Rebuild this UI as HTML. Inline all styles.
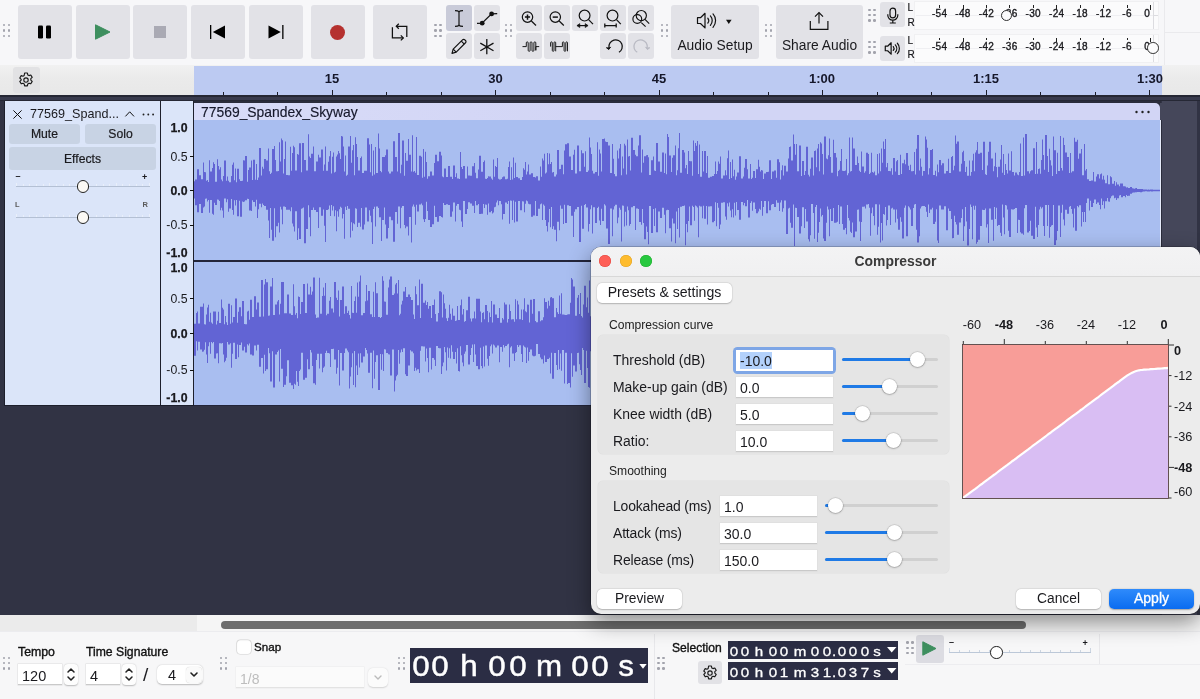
<!DOCTYPE html>
<html><head><meta charset="utf-8"><title>Audacity</title>
<style>
*{box-sizing:border-box;margin:0;padding:0}
html,body{width:1200px;height:699px;overflow:hidden}
body{position:relative;background:#f6f6f8;font-family:"Liberation Sans",sans-serif;color:#1a1a1e;font-size:14px}
.abs,.btn,.grab i,.t,svg.ic{position:absolute}
.btn{background:#e2e2e7;border-radius:3px}
.grab i{width:2.6px;height:2.6px;background:#a2a3ac;border-radius:50%;display:block}
.t{white-space:nowrap;line-height:1}
.md{-webkit-text-stroke:.35px #111;color:#111}
svg{position:absolute;overflow:visible}
.fld{position:absolute;background:#fff;border-bottom:1px solid #c9c9c9;box-shadow:0 0 0 .5px #dcdcdc}
.fld span{position:absolute;left:4px;top:4px;font-size:14px;line-height:1}
.sl{position:absolute;height:3px;border-radius:2px;background:#d0d0d0}
.sl b{position:absolute;left:0;top:0;height:3px;border-radius:2px;background:#1f7ae6;display:block}
.kn{position:absolute;width:15px;height:15px;border-radius:50%;background:#fff;box-shadow:0 .5px 2px rgba(0,0,0,.35),0 0 0 .5px rgba(0,0,0,.12)}
.mbtn{position:absolute;background:#fff;border-radius:5px;box-shadow:0 .5px 1.5px rgba(0,0,0,.22),0 0 0 .5px rgba(0,0,0,.06);text-align:center;font-size:14px}
.ch{position:absolute;color:#fff;text-align:center;line-height:1;white-space:nowrap}
#root{position:absolute;left:0;top:0;width:1200px;height:699px;overflow:hidden;will-change:transform}
</style></head><body><div id="root">
<div class="abs" style="left:0;top:0;width:1200px;height:65px;background:#f7f7f9"></div><div class="grab"><i style="left:2.6px;top:23.9px"></i><i style="left:7.7px;top:23.9px"></i><i style="left:2.6px;top:29.2px"></i><i style="left:7.7px;top:29.2px"></i><i style="left:2.6px;top:34.5px"></i><i style="left:7.7px;top:34.5px"></i></div><div class="btn" style="left:18px;top:5px;width:54px;height:54px"></div><div class="btn" style="left:76px;top:5px;width:54px;height:54px"></div><div class="btn" style="left:133px;top:5px;width:54px;height:54px"></div><div class="btn" style="left:191px;top:5px;width:54px;height:54px"></div><div class="btn" style="left:249px;top:5px;width:54px;height:54px"></div><div class="btn" style="left:311px;top:5px;width:54px;height:54px"></div><div class="btn" style="left:373px;top:5px;width:54px;height:54px"></div><div class="btn" style="left:446px;top:5px;width:26px;height:26px;background:#c9cbd9"></div><div class="btn" style="left:474px;top:5px;width:26px;height:26px"></div><div class="btn" style="left:446px;top:33px;width:26px;height:26px"></div><div class="btn" style="left:474px;top:33px;width:26px;height:26px"></div><div class="btn" style="left:516px;top:5px;width:26px;height:26px"></div><div class="btn" style="left:544px;top:5px;width:26px;height:26px"></div><div class="btn" style="left:572px;top:5px;width:26px;height:26px"></div><div class="btn" style="left:600px;top:5px;width:26px;height:26px"></div><div class="btn" style="left:628px;top:5px;width:26px;height:26px"></div><div class="btn" style="left:516px;top:33px;width:26px;height:26px"></div><div class="btn" style="left:544px;top:33px;width:26px;height:26px"></div><div class="btn" style="left:600px;top:33px;width:26px;height:26px"></div><div class="btn" style="left:628px;top:33px;width:26px;height:26px"></div><div class="btn" style="left:671px;top:5px;width:88px;height:54px"></div><div class="btn" style="left:776px;top:5px;width:87px;height:54px"></div><div class="btn" style="left:880px;top:2px;width:25px;height:25px"></div><div class="btn" style="left:880px;top:36px;width:25px;height:25px"></div><div class="grab"><i style="left:434.1px;top:23.9px"></i><i style="left:439.2px;top:23.9px"></i><i style="left:434.1px;top:29.2px"></i><i style="left:439.2px;top:29.2px"></i><i style="left:434.1px;top:34.5px"></i><i style="left:439.2px;top:34.5px"></i></div><div class="grab"><i style="left:504.5px;top:23.9px"></i><i style="left:509.6px;top:23.9px"></i><i style="left:504.5px;top:29.2px"></i><i style="left:509.6px;top:29.2px"></i><i style="left:504.5px;top:34.5px"></i><i style="left:509.6px;top:34.5px"></i></div><div class="grab"><i style="left:660.6px;top:23.9px"></i><i style="left:665.7px;top:23.9px"></i><i style="left:660.6px;top:29.2px"></i><i style="left:665.7px;top:29.2px"></i><i style="left:660.6px;top:34.5px"></i><i style="left:665.7px;top:34.5px"></i></div><div class="grab"><i style="left:764.6px;top:23.9px"></i><i style="left:769.7px;top:23.9px"></i><i style="left:764.6px;top:29.2px"></i><i style="left:769.7px;top:29.2px"></i><i style="left:764.6px;top:34.5px"></i><i style="left:769.7px;top:34.5px"></i></div><div class="grab"><i style="left:868.3px;top:8.5px"></i><i style="left:873.4px;top:8.5px"></i><i style="left:868.3px;top:13.8px"></i><i style="left:873.4px;top:13.8px"></i><i style="left:868.3px;top:19.1px"></i><i style="left:873.4px;top:19.1px"></i></div><div class="grab"><i style="left:868.3px;top:40.5px"></i><i style="left:873.4px;top:40.5px"></i><i style="left:868.3px;top:45.8px"></i><i style="left:873.4px;top:45.8px"></i><i style="left:868.3px;top:51.1px"></i><i style="left:873.4px;top:51.1px"></i></div><svg style="left:0;top:0" width="1200" height="65"><rect x="38" y="25.500" width="5" height="13" rx="1.300" fill="#000"/><rect x="46" y="25.500" width="5" height="13" rx="1.300" fill="#000"/><path d="M95.500 24.800L110 32 95.500 39.200Z" fill="#3e8f5f" stroke="#3e8f5f" stroke-width="1" stroke-linejoin="round"/><rect x="154" y="26" width="12" height="12" fill="#aaaab4"/><rect x="210" y="25" width="1.300" height="14" fill="#000"/><path d="M225 25.500V38.500L212.800 32Z" fill="#000"/><rect x="282.200" y="25" width="1.300" height="14" fill="#000"/><path d="M268.500 25.500V38.500L280.800 32Z" fill="#000"/><circle cx="337.500" cy="32.500" r="7.500" fill="#b5312f"/><g fill="none" stroke="#111" stroke-width="1.250"><path d="M392.400 27.200V37.900H403.200"/><path d="M400.800 35.400l2.500 2.500-2.500 2.500"/><path d="M406.800 37V26.300H396.400"/><path d="M398.800 23.800l-2.500 2.500 2.500 2.500"/></g><g fill="none" stroke="#111" stroke-width="1.200"><path d="M459 11.200V25.800"/><path d="M455 10.700q3 0 4 1q1-1 4-1M455 26.300q3 0 4-1q1 1 4 1"/></g><path d="M477 23.400L482 23.200 491.600 13.900 497.200 13.700" stroke="#111" stroke-width="1.300" fill="none"/><circle cx="482.200" cy="23.200" r="2.400" fill="#111"/><circle cx="491.600" cy="13.900" r="2.400" fill="#111"/><g transform="translate(451,38.300)" fill="none" stroke="#111" stroke-width="1.200" stroke-linejoin="round"><path d="M1 15l1.200-4.200L11.500 1.500a1.600 1.600 0 0 1 2.300 0l.7.700a1.600 1.600 0 0 1 0 2.300L5.200 13.800z"/><path d="M2.200 10.800l3 3M10.300 2.800l3 3"/></g><path d="M486.800 39V54.300M480.300 43.100l13.200 7.700M493.500 43.100l-13.200 7.700" stroke="#111" stroke-width="1.300" fill="none"/><g fill="none" stroke="#111" stroke-width="1.200"><circle cx="527.5" cy="17.100" r="5.200"/><path d="M531.4 21l4.600 4.500"/><path d="M524.9 17.100h5.200M527.5 14.500v5.200" stroke-width="1.500"/></g><g fill="none" stroke="#111" stroke-width="1.200"><circle cx="555.3" cy="17.100" r="5.200"/><path d="M559.2 21l4.600 4.500"/><path d="M552.7 17.100h5.200" stroke-width="1.500"/></g><g fill="none" stroke="#111" stroke-width="1.200"><circle cx="584.600" cy="15.600" r="5.400"/><path d="M588.600 19.600l4.400 4.600"/><path d="M577.500 25.600h10"/><path d="M579.800 23.600l-2.900 2 2.900 2zM585.200 23.600l2.900 2-2.900 2z" fill="#111" stroke-width=".6"/></g><g fill="none" stroke="#111" stroke-width="1.200"><circle cx="612.500" cy="15.600" r="5.400"/><path d="M616.500 19.600l4.300 4.600"/><path d="M604.800 25.600h11.400M604.800 23.600v4M616.200 23.600v4" stroke-width="1.300"/></g><g fill="none" stroke="#111" stroke-width="1.150"><circle cx="641.300" cy="15.600" r="5.100"/><circle cx="637.300" cy="19" r="4.400"/><path d="M645 19.400l4.200 4.200M641.300 22.600l4.300 4"/></g><g fill="none" stroke="#111" stroke-width=".950"><path d="M522.500 46.600h3.800M535.800 46.600h3.400"/><path d="M526.30 46.60V42.85a0.95 0.95 0 0 1 1.90 0V50.35a0.95 0.95 0 0 0 1.90 0V42.85a0.95 0.95 0 0 1 1.90 0V50.35a0.95 0.95 0 0 0 1.90 0V42.85a0.95 0.95 0 0 1 1.90 0V50.35V46.600"/></g><g fill="none" stroke="#111" stroke-width=".950"><path d="M555.600 46.600h6.800"/><path d="M550.60 46.60V42.75a0.85 0.85 0 0 1 1.70 0V50.45a0.85 0.85 0 0 0 1.70 0V42.75a0.85 0.85 0 0 1 1.70 0V51.300"/><path d="M562.40 46.60V42.75a0.85 0.85 0 0 1 1.70 0V50.45a0.85 0.85 0 0 0 1.70 0V42.75a0.85 0.85 0 0 1 1.70 0V51.300"/></g><g fill="none" stroke="#111" stroke-width="1.250"><path d="M608.97 47.43A6.70 6.70 0 1 1 618.95 52.30"/><path d="M606.200 47.600l2.600 1.900 1.900-2.600" fill="#111" stroke-width="1" stroke-linejoin="round"/></g><g fill="none" stroke="#b9bac3" stroke-width="1.250"><path d="M647.23 47.43A6.70 6.70 0 1 0 637.25 52.30"/><path d="M650 47.600l-2.600 1.900-1.900-2.600" fill="#b9bac3" stroke-width="1" stroke-linejoin="round"/></g><g transform="translate(696.5,12.3) scale(1.00)" fill="none" stroke="#111" stroke-width="1.20" stroke-linejoin="round"><path d="M1 5.400h3L8.500 1v14.600L4 11.200H1z"/><path d="M11.300 5.800a4 4 0 0 1 0 5M13.900 3.600a7 7 0 0 1 0 9.400M16.500 1.600a10 10 0 0 1 0 13.400" stroke-linecap="round"/></g><path d="M726 19.800h5.600l-2.800 4.200z" fill="#111"/><g transform="translate(884.5,42.0) scale(0.78)" fill="none" stroke="#111" stroke-width="1.54" stroke-linejoin="round"><path d="M1 5.400h3L8.500 1v14.600L4 11.200H1z"/><path d="M11.300 5.800a4 4 0 0 1 0 5M13.900 3.600a7 7 0 0 1 0 9.400M16.500 1.600a10 10 0 0 1 0 13.400" stroke-linecap="round"/></g><g fill="none" stroke="#111" stroke-width="1.200"><path d="M810.300 21v8.300h17.600V21"/><path d="M819 23.400V12.800"/><path d="M815 16.600l4-4 4 4"/></g><g fill="none" stroke="#111" stroke-width="1.200"><rect x="890" y="8.200" width="5.600" height="9.600" rx="2.800"/><path d="M887.800 14.200v1a5 5 0 0 0 10 0v-1M892.800 20.300v2.600M889.800 23h6"/></g></svg><div class="t" style="left:671px;top:38.500px;width:88px;text-align:center;font-size:13.800px">Audio Setup</div><div class="t" style="left:776px;top:39px;width:87px;text-align:center;font-size:13.800px">Share Audio</div><div class="abs" style="left:915px;top:2.0px;width:243px;height:27px;background:#fbfbfc;box-shadow:0 0 0 1px #f0f0f2"></div><div class="abs" style="left:916px;top:15.0px;width:237px;height:1px;background:#efeff2"></div><div class="abs" style="left:1153px;top:2.0px;width:1px;height:27px;background:#dcdce0"></div><div class="abs" style="left:1153px;top:15.0px;width:5px;height:1px;background:#dcdce0"></div><div class="t" style="left:907.500px;top:2.8px;font-size:10px;-webkit-text-stroke:.2px #1a1a1e">L</div><div class="t" style="left:907.500px;top:17.8px;font-size:10px;-webkit-text-stroke:.2px #1a1a1e">R</div><div class="t" style="left:924.6px;top:9.3px;width:30px;text-align:center;font-size:10px;letter-spacing:.3px;-webkit-text-stroke:.35px #1a1a1e">-54</div><div class="abs" style="left:939.1px;top:5.0px;width:1px;height:2.6px;background:#222"></div><div class="t" style="left:948.0px;top:9.3px;width:30px;text-align:center;font-size:10px;letter-spacing:.3px;-webkit-text-stroke:.35px #1a1a1e">-48</div><div class="abs" style="left:962.5px;top:5.0px;width:1px;height:4.6px;background:#222"></div><div class="t" style="left:971.5px;top:9.3px;width:30px;text-align:center;font-size:10px;letter-spacing:.3px;-webkit-text-stroke:.35px #1a1a1e">-42</div><div class="abs" style="left:986.0px;top:5.0px;width:1px;height:2.6px;background:#222"></div><div class="t" style="left:994.9px;top:9.3px;width:30px;text-align:center;font-size:10px;letter-spacing:.3px;-webkit-text-stroke:.35px #1a1a1e">-36</div><div class="abs" style="left:1009.4px;top:5.0px;width:1px;height:2.6px;background:#222"></div><div class="t" style="left:1018.3px;top:9.3px;width:30px;text-align:center;font-size:10px;letter-spacing:.3px;-webkit-text-stroke:.35px #1a1a1e">-30</div><div class="abs" style="left:1032.8px;top:5.0px;width:1px;height:2.6px;background:#222"></div><div class="t" style="left:1041.8px;top:9.3px;width:30px;text-align:center;font-size:10px;letter-spacing:.3px;-webkit-text-stroke:.35px #1a1a1e">-24</div><div class="abs" style="left:1056.2px;top:5.0px;width:1px;height:4.6px;background:#222"></div><div class="t" style="left:1065.2px;top:9.3px;width:30px;text-align:center;font-size:10px;letter-spacing:.3px;-webkit-text-stroke:.35px #1a1a1e">-18</div><div class="abs" style="left:1079.7px;top:5.0px;width:1px;height:2.6px;background:#222"></div><div class="t" style="left:1088.6px;top:9.3px;width:30px;text-align:center;font-size:10px;letter-spacing:.3px;-webkit-text-stroke:.35px #1a1a1e">-12</div><div class="abs" style="left:1103.1px;top:5.0px;width:1px;height:2.6px;background:#222"></div><div class="t" style="left:1112.0px;top:9.3px;width:30px;text-align:center;font-size:10px;letter-spacing:.3px;-webkit-text-stroke:.35px #1a1a1e">-6</div><div class="abs" style="left:1126.5px;top:5.0px;width:1px;height:2.6px;background:#222"></div><div class="t" style="left:1120.2px;top:9.3px;width:30px;text-align:right;font-size:10px;letter-spacing:.3px;-webkit-text-stroke:.35px #1a1a1e">0</div><div class="abs" style="left:1150.0px;top:5.0px;width:1px;height:4.6px;background:#222"></div><div class="abs" style="left:915px;top:34.5px;width:243px;height:27px;background:#fbfbfc;box-shadow:0 0 0 1px #f0f0f2"></div><div class="abs" style="left:916px;top:47.5px;width:237px;height:1px;background:#efeff2"></div><div class="abs" style="left:1153px;top:34.5px;width:1px;height:27px;background:#dcdce0"></div><div class="abs" style="left:1153px;top:47.5px;width:5px;height:1px;background:#dcdce0"></div><div class="t" style="left:907.500px;top:35.9px;font-size:10px;-webkit-text-stroke:.2px #1a1a1e">L</div><div class="t" style="left:907.500px;top:50.3px;font-size:10px;-webkit-text-stroke:.2px #1a1a1e">R</div><div class="t" style="left:924.6px;top:41.9px;width:30px;text-align:center;font-size:10px;letter-spacing:.3px;-webkit-text-stroke:.35px #1a1a1e">-54</div><div class="abs" style="left:939.1px;top:37.6px;width:1px;height:2.6px;background:#222"></div><div class="t" style="left:948.0px;top:41.9px;width:30px;text-align:center;font-size:10px;letter-spacing:.3px;-webkit-text-stroke:.35px #1a1a1e">-48</div><div class="abs" style="left:962.5px;top:37.6px;width:1px;height:4.6px;background:#222"></div><div class="t" style="left:971.5px;top:41.9px;width:30px;text-align:center;font-size:10px;letter-spacing:.3px;-webkit-text-stroke:.35px #1a1a1e">-42</div><div class="abs" style="left:986.0px;top:37.6px;width:1px;height:2.6px;background:#222"></div><div class="t" style="left:994.9px;top:41.9px;width:30px;text-align:center;font-size:10px;letter-spacing:.3px;-webkit-text-stroke:.35px #1a1a1e">-36</div><div class="abs" style="left:1009.4px;top:37.6px;width:1px;height:2.6px;background:#222"></div><div class="t" style="left:1018.3px;top:41.9px;width:30px;text-align:center;font-size:10px;letter-spacing:.3px;-webkit-text-stroke:.35px #1a1a1e">-30</div><div class="abs" style="left:1032.8px;top:37.6px;width:1px;height:2.6px;background:#222"></div><div class="t" style="left:1041.8px;top:41.9px;width:30px;text-align:center;font-size:10px;letter-spacing:.3px;-webkit-text-stroke:.35px #1a1a1e">-24</div><div class="abs" style="left:1056.2px;top:37.6px;width:1px;height:4.6px;background:#222"></div><div class="t" style="left:1065.2px;top:41.9px;width:30px;text-align:center;font-size:10px;letter-spacing:.3px;-webkit-text-stroke:.35px #1a1a1e">-18</div><div class="abs" style="left:1079.7px;top:37.6px;width:1px;height:2.6px;background:#222"></div><div class="t" style="left:1088.6px;top:41.9px;width:30px;text-align:center;font-size:10px;letter-spacing:.3px;-webkit-text-stroke:.35px #1a1a1e">-12</div><div class="abs" style="left:1103.1px;top:37.6px;width:1px;height:2.6px;background:#222"></div><div class="t" style="left:1112.0px;top:41.9px;width:30px;text-align:center;font-size:10px;letter-spacing:.3px;-webkit-text-stroke:.35px #1a1a1e">-6</div><div class="abs" style="left:1126.5px;top:37.6px;width:1px;height:2.6px;background:#222"></div><div class="t" style="left:1120.2px;top:41.9px;width:30px;text-align:right;font-size:10px;letter-spacing:.3px;-webkit-text-stroke:.35px #1a1a1e">0</div><div class="abs" style="left:1150.0px;top:37.6px;width:1px;height:4.6px;background:#222"></div><div class="abs" style="left:1000.800px;top:9.900px;width:11.600px;height:11.600px;border-radius:50%;border:1.400px solid #2e2e2e;background:#fbfbfc"></div><div class="abs" style="left:1147.400px;top:42.400px;width:11.600px;height:11.600px;border-radius:50%;border:1.400px solid #2e2e2e;background:#fbfbfc"></div><div class="abs" style="left:1164px;top:0;width:1px;height:65px;background:#eaeaed"></div><div class="abs" style="left:1165px;top:32px;width:35px;height:1px;background:#eaeaed"></div><div class="abs" style="left:0;top:65px;width:1200px;height:30px;background:linear-gradient(#f1f1f1,#ebebeb 40%,#e8e8e8)"></div><div class="abs" style="left:194px;top:66px;width:968px;height:29px;background:#bccaf2"></div><div class="btn" style="left:13px;top:67px;width:27px;height:26px;background:#e2e2e4"></div><svg style="left:18.0px;top:72.0px" width="16" height="16" viewBox="0 0 16 16" fill="none" stroke="#1a1a1a" stroke-width="1.150" stroke-linejoin="round"><path d="M6.600 1h2.800l.4 1.900 1.200.7 1.800-.6 1.400 2.400-1.400 1.300v1.400l1.400 1.300-1.400 2.400-1.800-.6-1.200.7-.4 1.900H6.600l-.4-1.900-1.200-.7-1.800.6-1.400-2.400 1.400-1.300V7.300L1.800 6 3.200 3.600l1.800.6 1.200-.7z"/><circle cx="8" cy="8" r="2.200"/></svg><div class="abs" style="left:222.5px;top:92px;width:1px;height:3px;background:#1b1d2b"></div><div class="abs" style="left:277.0px;top:92px;width:1px;height:3px;background:#1b1d2b"></div><div class="abs" style="left:331.5px;top:90px;width:1px;height:5px;background:#1b1d2b"></div><div class="abs" style="left:386.0px;top:92px;width:1px;height:3px;background:#1b1d2b"></div><div class="abs" style="left:440.5px;top:92px;width:1px;height:3px;background:#1b1d2b"></div><div class="abs" style="left:495.0px;top:90px;width:1px;height:5px;background:#1b1d2b"></div><div class="abs" style="left:549.5px;top:92px;width:1px;height:3px;background:#1b1d2b"></div><div class="abs" style="left:604.0px;top:92px;width:1px;height:3px;background:#1b1d2b"></div><div class="abs" style="left:658.5px;top:90px;width:1px;height:5px;background:#1b1d2b"></div><div class="abs" style="left:713.0px;top:92px;width:1px;height:3px;background:#1b1d2b"></div><div class="abs" style="left:767.5px;top:92px;width:1px;height:3px;background:#1b1d2b"></div><div class="abs" style="left:822.0px;top:90px;width:1px;height:5px;background:#1b1d2b"></div><div class="abs" style="left:876.5px;top:92px;width:1px;height:3px;background:#1b1d2b"></div><div class="abs" style="left:931.0px;top:92px;width:1px;height:3px;background:#1b1d2b"></div><div class="abs" style="left:985.5px;top:90px;width:1px;height:5px;background:#1b1d2b"></div><div class="abs" style="left:1040.0px;top:92px;width:1px;height:3px;background:#1b1d2b"></div><div class="abs" style="left:1094.5px;top:92px;width:1px;height:3px;background:#1b1d2b"></div><div class="abs" style="left:1149.0px;top:90px;width:1px;height:5px;background:#1b1d2b"></div><div class="t" style="left:302.0px;top:72px;width:60px;text-align:center;font-size:13px;font-weight:bold;color:#15172a">15</div><div class="t" style="left:465.5px;top:72px;width:60px;text-align:center;font-size:13px;font-weight:bold;color:#15172a">30</div><div class="t" style="left:629.0px;top:72px;width:60px;text-align:center;font-size:13px;font-weight:bold;color:#15172a">45</div><div class="t" style="left:792.0px;top:72px;width:60px;text-align:center;font-size:13px;font-weight:bold;color:#15172a">1:00</div><div class="t" style="left:956.0px;top:72px;width:60px;text-align:center;font-size:13px;font-weight:bold;color:#15172a">1:15</div><div class="t" style="left:1120.0px;top:72px;width:60px;text-align:center;font-size:13px;font-weight:bold;color:#15172a">1:30</div><div class="abs" style="left:0;top:95px;width:1200px;height:520px;background:#313344"></div><div class="abs" style="left:0;top:95px;width:1200px;height:6px;background:linear-gradient(#252734 0,#252734 35%,#383a4d 36%,#383a4d 80%,#262835 81%)"></div><div class="abs" style="left:1162px;top:101px;width:35px;height:514px;background:#45475a"></div><div class="abs" style="left:4px;top:101px;width:157px;height:305px;background:#dbe5f9;border:1px solid #1d1f2c;border-top:none"></div><div class="abs" style="left:161px;top:101px;width:33px;height:305px;background:#dbe5f9;border-right:1px solid #1d1f2c;border-bottom:1px solid #1d1f2c"></div><div class="abs" style="left:194px;top:101px;width:967px;height:20px;background:#2a2c3b"></div><div class="abs" style="left:194px;top:119px;width:967px;height:287px;background:#a9bef0"></div><div class="abs" style="left:194px;top:101px;width:967px;height:2px;background:#2a2c3b"></div><div class="abs" style="left:194px;top:103px;width:966px;height:17px;background:linear-gradient(90deg,#d9dcf8,#d2d5f5 40%);border-radius:0 5px 0 0"></div><div class="abs" style="left:1160px;top:103px;width:2px;height:17px;background:#45475a"></div><div class="abs" style="left:1160px;top:120px;width:1px;height:286px;background:#e6ebfa"></div><div class="abs" style="left:1161px;top:120px;width:1px;height:286px;background:#2a2c3b"></div><div class="abs" style="left:194px;top:260px;width:967px;height:2px;background:#23253a"></div><div class="abs" style="left:194px;top:405px;width:967px;height:1px;background:#23253a"></div><div class="t" style="left:201px;top:106px;font-size:13.900px;color:#15172a;-webkit-text-stroke:.15px #15172a">77569_Spandex_Skyway</div><svg style="left:1135px;top:110px" width="16" height="4"><circle cx="1.500" cy="2" r="1.200" fill="#222"/><circle cx="7.500" cy="2" r="1.200" fill="#222"/><circle cx="13.500" cy="2" r="1.200" fill="#222"/></svg><svg style="left:0;top:0" width="1200" height="699"><path d="M194 190.5V181.2H195V179.4H197V169.2H199V175.2H201V179.2H203V162.4H204V172.1H205V172.3H206V180.8H207V180.1H208V182.1H209V160.2H210V171.6H212V167.9H213V162.2H214V164H215V181.8H217V159.3H218V166H219V169.5H220V167.3H221V179.6H222V181.3H223V176.1H224V160.6H226V180.8H227V176.6H228V180.7H229V182.2H231V176.1H232V164.8H233V162.4H234V180.3H235V168.4H236V182.3H237V168.7H239V179.3H240V181.1H242V180.8H243V160.3H244V160.6H245V156H247V181.8H248V169.9H249V167.6H251V160.5H252V180.1H253V159.8H255V179.8H256V163.9H257V180H258V177.6H259V148.1H261V175.6H262V166.7H263V168.7H264V158.9H266V160.6H268V148.6H269V171.3H270V173.9H271V172.8H272V149H274V146.1H275V160H276V171.3H278V170.9H279V142.2H280V161.6H281V138.5H282V140.3H283V173.5H284V158.9H285V141.5H286V174.9H288V175.2H290V146.8H291V170.7H292V153H293V145.7H294V147.2H295V170.6H297V153.9H298V154.8H299V143.3H301V172.3H302V143H303V143.1H304V160.1H306V170.5H308V134.2H309V156.5H310V158H311V153.8H313V146.4H314V171.2H316V161.5H318V154.7H319V157.4H321V149.4H323V170.7H324V164.4H325V146.5H326V170.7H328V161.8H329V156.3H330V151.1H331V173.6H332V156.7H333V152.5H334V172.6H335V171.8H336V156.6H337V154.5H338V151H339V153.2H340V159H341V136H342V136.6H343V146.6H344V171.5H345V155.6H346V175.8H347V174.7H348V146.6H350V135.9H351V162.7H352V150.2H353V144.9H354V175.2H355V137.2H356V144H357V157.1H358V170.5H360V158H361V156.5H362V172.9H364V170.7H365V170.7H367V138.3H369V144.6H370V172.2H371V144.1H372V175.8H373V150.5H374V174.5H375V147H376V173.1H378V133.5H379V148.6H380V171.1H381V172.2H382V157.1H384V157H385V155.3H386V149.5H388V171.6H389V173.5H391V171.4H393V141.3H395V157H397V171.5H398V133.1H400V173.2H401V164.8H402V140.5H404V175.7H405V152.9H406V160.8H408V139H409V154.7H411V171.5H412V135.2H413V171.7H414V171.1H415V172.8H416V137.1H417V175H419V155.7H421V156.8H422V177.7H423V149H424V176.8H425V151.7H426V162.1H427V178.8H428V176.2H430V171.5H432V175.5H434V162.9H435V154.7H437V161.2H439V151.8H441V155.4H442V176.5H443V177.3H444V168.6H446V177H448V166.1H450V176.8H452V178.9H453V165.4H455V176.9H456V173.2H457V178.6H459V178.9H460V152.1H461V166.9H462V169.1H463V166H465V178.6H467V166.6H468V175.5H470V175.8H472V166.2H474V163H475V172.7H476V178.2H478V169.6H479V155.7H481V171.8H483V161.9H484V160.5H485V178.8H486V179.1H487V177.9H488V176.3H489V176.4H491V178.4H492V179.7H493V159.5H494V176.8H495V166H496V167.1H497V157.9H498V178.8H499V179.5H501V179.1H502V177.3H503V176.4H505V179.2H507V178.8H508V166.9H509V161.4H510V180.1H511V167.2H512V179.6H513V157.6H514V177.9H515V162.7H516V176.9H518V178.2H520V179.9H522V177H523V168.2H524V169.7H525V161.9H526V174.4H527V171.5H528V164.6H529V174.4H531V173.2H533V177H535V177.4H536V176.2H538V180.4H540V166.5H541V176.7H542V158.6H543V160.4H544V153.8H545V173.5H546V172.4H547V152.9H548V164.3H549V153.6H550V164H551V162.1H552V172.4H553V172H554V176.5H556V174.4H557V149.9H559V169.2H560V169.1H561V164.7H563V174.2H564V150.5H565V144.2H567V143.3H569V156.4H571V169.9H573V154.7H574V149.7H575V173.6H577V145.4H579V171.3H581V150.3H582V153.3H584V166.8H585V151.2H586V172.1H588V170.4H589V137.5H590V147.5H591V153.9H592V170.8H593V173.4H595V171.9H597V142.2H598V175.7H599V149.4H600V153.4H601V171.4H602V138.9H604V138.5H605V141.5H606V142H608V145.6H610V172.9H612V144.1H613V158.7H614V174.1H615V176.3H617V150.4H618V158.4H619V148.4H620V144H621V175.2H622V156.4H623V168.5H624V143.7H625V145.5H626V174.6H627V139.6H628V156.4H629V156H630V170.5H631V137.8H633V150H635V154.8H636V156.2H638V145.6H639V135.3H641V172.6H642V149.5H643V162.8H644V156.2H646V155.3H647V155H648V157.2H649V175.1H651V160.2H653V156.4H654V170.6H655V170.9H656V143H658V161.5H660V171.8H662V152.5H664V173H665V153.4H666V174.3H667V134H668V137.1H669V155.5H671V171.9H672V157.7H673V155.3H675V145.5H676V175.3H677V170.3H678V148.2H679V133.1H680V172.7H682V149.9H684V152.5H685V168.3H686V164.9H687V173.9H688V151H689V161H690V161.3H692V175.8H693V140.6H694V151.1H695V142.9H696V145.8H697V141H698V174.1H699V144.4H700V176.7H702V150.9H703V171.5H704V151.1H706V173.1H707V155.9H708V177.7H710V176.7H712V176.1H714V174.1H715V161.4H716V173.9H717V170.9H718V161.6H719V163.7H720V156.4H721V178.5H723V175.6H725V170.3H726V175.3H727V158.3H728V150.6H729V179H730V161.9H731V178H732V159.5H733V176.3H734V169.8H735V179.7H736V176.6H737V172.6H739V156.2H741V178.5H743V176.6H744V167.7H745V159H747V169.3H748V178.6H750V164.1H751V179.1H752V177.7H753V171H755V178.1H756V169.3H758V159.7H759V166.7H760V171.5H761V169.9H762V170.4H763V179.1H764V173.5H766V172H768V171.7H769V160.2H771V179.1H772V171.6H774V170.4H776V177.8H777V159.2H779V162.2H780V179.5H781V170.2H782V165.3H783V175.5H784V165.7H786V171.4H788V158.4H789V147.1H790V146.5H791V160.4H793V134.5H794V144H795V154.7H796V144H797V171.2H799V145.4H801V176H802V160.9H804V175.1H805V171H806V146.8H808V174.8H809V176.5H810V168.7H811V157.6H813V175.4H814V150.9H815V150.4H816V167.3H817V148.6H818V143.9H819V171.2H820V142.3H821V143.4H822V154H823V174.4H824V136.4H826V158.6H827V159.2H828V155.3H829V138.4H830V157H831V172.7H833V139.8H834V153H836V157.4H837V176.2H838V171.1H839V169.8H840V161.1H841V149H842V170.7H843V170.9H845V170.5H846V159H847V175.2H848V173.2H849V137.6H850V171.4H851V171.1H852V137.6H853V148.6H855V164.9H857V156.6H858V163.1H859V170.7H860V171.9H861V151.4H862V166.5H864V172.8H865V171.2H866V152.7H868V153.9H869V173.9H870V172.8H871V152.8H872V172.1H873V172.7H874V171.5H875V175.3H877V154H878V173.6H879V153.2H880V171.2H881V148.5H882V162.8H883V141.5H884V149.1H885V138.9H886V167.3H887V163H888V171.1H890V171.3H891V168.2H892V174.8H893V157.9H895V171.4H896V161.2H897V159.9H898V175H900V154.8H901V174.1H902V163.3H904V159.8H905V164.3H906V152.9H908V165.8H909V169.9H910V164.7H911V171.3H913V170.9H914V152H915V174.5H916V148.8H917V135.1H919V170.5H920V158.4H921V166.7H922V175.7H923V171H925V136.6H926V139.4H927V147.7H928V174.4H929V168.2H930V150.1H932V149H933V175H935V170.8H936V176.3H937V164.5H938V172.2H939V159.9H941V165.3H942V163.2H944V173.5H946V171.1H948V158.7H949V173.1H951V156.9H952V155.9H953V170.3H954V165.7H955V135.5H956V143.7H957V141.6H959V171.4H961V163.7H962V152.2H963V150.7H964V161.1H965V172.1H966V166.7H967V175.8H969V160.4H970V175.8H971V171.9H972V160.5H973V153.8H974V171.2H975V152.5H976V150.2H977V142H978V153.8H980V152.8H982V170.1H983V141.8H985V174.3H986V175H987V165.6H988V151.8H989V141.7H991V158.6H993V171.3H994V166.3H995V152.7H996V166.9H997V177.3H998V166.8H1000V159.5H1001V145.1H1002V172.7H1003V154.1H1004V175.1H1005V163.9H1006V170.1H1007V173.5H1008V153.5H1009V170.4H1011V151.3H1012V172.1H1014V175.4H1015V172.5H1017V174.4H1018V175.2H1019V172.1H1020V143.6H1021V175.9H1023V137.6H1024V175.4H1025V134.1H1027V171.2H1029V173.5H1030V171.3H1031V170.2H1033V148.3H1035V173.9H1036V141.9H1037V173.8H1038V169H1039V168.5H1040V173.8H1041V160.1H1042V139.5H1043V155.1H1044V169.8H1045V134.9H1047V156H1048V171.9H1049V148.7H1050V160.3H1051V165.4H1052V176.1H1053V136.6H1054V150.3H1056V174H1057V152.8H1058V171H1060V135.9H1061V168H1062V170.5H1063V137.7H1064V144.9H1065V152.6H1067V157H1069V173.1H1070V153H1071V172.4H1072V171.3H1073V171.3H1074V137.7H1075V141.7H1077V139.8H1078V158.8H1079V153.6H1081V149.1H1082V175.2H1083V175.2H1084V144H1085V170.5H1086V169H1087V179.2H1089V181.1H1090V181.1H1091V180.6H1093V172H1094V181.6H1096V176.6H1097V174.2H1099V178.4H1100V174.2H1101V173.6H1102V179.6H1103V175.8H1104V179.7H1105V183.2H1107V175.2H1108V184.3H1109V184.2H1110V176.2H1111V177.2H1112V183.8H1114V181.1H1115V185.7H1116V182.2H1117V184.4H1119V186.3H1120V183.6H1121V183.6H1123V186.2H1125V186.6H1126V187.6H1127V187.3H1128V188.1H1130V187.1H1132V188.2H1133V188.5H1134V188.8H1135V188.3H1136V188.1H1137V189H1139V189.1H1140V189.1H1142V188.9H1143V189.5H1144V189.4H1145V189.6H1147V189.7H1148V189.5H1149V189.7H1150V189.6H1151V189.6H1153V189.7H1154V189.7H1155V189.7H1157V189.7H1158V189.7H1160V190.5V191.2H1158V191.3H1157V191.3H1155V191.3H1154V191.3H1153V191.4H1151V191.3H1150V191.5H1149V191.4H1148V191.4H1147V191.3H1145V191.5H1144V191.6H1143V191.7H1142V192.2H1140V192H1139V191.9H1137V192.3H1136V192.3H1135V192.4H1134V192.6H1133V192.8H1132V193.7H1130V195.7H1128V196.1H1127V195.1H1126V197.2H1125V196H1123V197.2H1121V195.1H1120V195.4H1119V198.3H1117V199.9H1116V197.8H1115V198.2H1114V195.5H1112V196.3H1111V198.3H1110V201.7H1109V201.4H1108V197.9H1107V201.2H1105V208.5H1104V201.3H1103V205H1102V198.5H1101V209.2H1100V204.9H1099V202.5H1097V204.1H1096V199.6H1094V203H1093V206.9H1091V200.8H1090V210.6H1089V198.5H1087V203H1086V222H1085V212.1H1084V222H1083V212H1082V226.5H1081V205.3H1079V207.2H1078V206H1077V230.7H1075V208.5H1074V227.5H1073V213.8H1072V209.1H1071V206H1070V206.7H1069V213.7H1067V209.7H1065V225.5H1064V219.4H1063V204.7H1062V212.8H1061V236.9H1060V205.5H1058V231.1H1057V240.2H1056V245H1054V204.9H1053V224.9H1052V225.5H1051V227H1050V237.7H1049V205H1048V226.1H1047V204.9H1045V236H1044V225.9H1043V207.3H1042V208.5H1041V206.7H1040V209.4H1039V224.9H1038V236.9H1037V227.6H1036V206.7H1035V239H1033V235.8H1031V220.7H1030V231H1029V232.6H1027V204.9H1025V208.2H1024V234.8H1023V233.6H1021V232.2H1020V219.9H1019V219.7H1018V233.1H1017V207.9H1015V208.9H1014V209.6H1012V209.2H1011V237.1H1009V230.7H1008V209.6H1007V205.6H1006V205H1005V234.3H1004V217.4H1003V204.5H1002V236.1H1001V232.7H1000V225.1H998V226.1H997V207.7H996V218.9H995V207H994V240.8H993V219.8H991V208.6H989V243H988V224.3H987V227.6H986V208.4H985V210H983V209.8H982V226.1H980V239.8H978V241.9H977V243.7H976V205.7H975V209.8H974V205.7H973V239.2H972V207H971V204.4H970V228.9H969V245.4H967V221.5H966V207H965V226.3H964V241H963V209.3H962V218H961V222.5H959V234.8H957V224.4H956V222H955V215.8H954V237.9H953V238.3H952V219H951V211H949V208.6H948V230.2H946V206.2H944V209.5H942V209.6H941V205.5H939V243.1H938V240.6H937V209.2H936V221.8H935V224H933V207.8H932V209.6H930V213H929V204.5H928V217H927V211.7H926V206.9H925V206.1H923V205.9H922V206.4H921V208.4H920V236.3H919V242.4H917V229.8H916V204.1H915V204.5H914V207.9H913V226.1H911V209.6H910V207.6H909V206.3H908V236.2H906V205.4H905V207.8H904V238.5H902V221.8H901V217.3H900V229.7H898V218.7H897V209.4H896V222.4H895V209.4H893V207.7H892V208.5H891V224.9H890V205.4H888V219.9H887V225.6H886V207H885V214.8H884V213.9H883V240.5H882V223.1H881V242.6H880V204.5H879V226.8H878V234.8H877V204.2H875V225.2H874V215.9H873V207.5H872V213.3H871V235.8H870V207.8H869V204.1H868V204.6H866V208.5H865V206.5H864V206.8H862V222H861V241H860V221.4H859V209.5H858V209.8H857V231.6H855V237.2H853V222.4H852V232.9H851V231.8H850V220.4H849V218H848V204.9H847V234.2H846V227.9H845V229.7H843V224H842V206.5H841V206.6H840V224H839V205H838V221.7H837V222.4H836V222.7H834V208.1H833V221.1H831V209H830V236.2H829V209.5H828V206.4H827V222.8H826V241H824V238.4H823V215H822V216.5H821V208.5H820V222.1H819V232.7H818V242H817V205H816V207H815V238.8H814V213H813V204H811V235.3H810V241.6H809V239.3H808V221.4H806V208.9H805V227.9H804V207.2H802V226.2H801V233.6H799V217.1H797V207.9H796V207.8H795V245.9H794V204.4H793V227.8H791V222.8H790V207.7H789V208.4H788V234.1H786V200.4H784V208.2H783V211.7H782V200.2H781V202.6H780V210.9H779V202.7H777V200.2H776V207.1H774V204H772V204.7H771V210.2H769V201.3H768V213.3H766V201.1H764V206.9H763V215.7H762V201.1H761V209.8H760V208.8H759V211.5H758V213.3H756V208.9H755V202.4H753V210.8H752V201.3H751V203H750V217.6H748V199.9H747V206.2H745V203.1H744V205.3H743V202.1H741V219.7H739V210.1H737V201.9H736V215.5H735V202.7H734V217.6H733V209.3H732V217.2H731V210.5H730V202.5H729V206.6H728V203.3H727V219.8H726V216.4H725V202.3H723V202.7H721V224.5H720V228.9H719V207.8H718V203H717V226.2H716V202.3H715V221.1H714V222.2H712V206.3H710V206.5H708V224.6H707V205.9H706V218.7H704V205.7H703V218.3H702V206.4H700V205.8H699V237.3H698V207.4H697V206.3H696V205.5H695V220.8H694V206.9H693V205.7H692V225.3H690V206.5H689V221.1H688V232.3H687V223.9H686V245.3H685V205.5H684V206.1H682V206.7H680V237.5H679V208.1H678V229.1H677V211.4H676V243.2H675V223.5H673V218.5H672V241.6H671V228.3H669V209.9H668V209.7H667V210.2H666V233.2H665V214.7H664V207.7H662V218H660V211.5H658V232.3H656V208.2H655V226.1H654V209H653V233H651V206.1H649V244.3H648V231.9H647V226.5H646V239.2H644V223.1H643V208.9H642V224.8H641V222H639V208.9H638V208.5H636V230H635V206H633V207.3H631V224.1H630V225.7H629V210.2H628V206.5H627V225.5H626V211.8H625V226.5H624V205.7H623V205.5H622V241.5H621V209.8H620V207.8H619V217.6H618V223.3H617V204.7H615V206.3H614V209.4H613V236.2H612V208.6H610V243.9H608V228.6H606V205.4H605V204.3H604V220.9H602V208.7H601V224.9H600V220.6H599V206.8H598V207.9H597V223.1H595V207.2H593V233.5H592V205.3H591V209.3H590V223.9H589V231.5H588V207.5H586V204.1H585V205H584V228.8H582V205.7H581V241.9H579V207.1H577V209.2H575V211.8H574V237.1H573V215.8H571V206.1H569V205.2H567V223.1H565V204.8H564V224.1H563V208.8H561V205.4H560V230.3H559V221.7H557V241.2H556V229.7H554V226.3H553V229.1H552V206.9H551V227.2H550V208.9H549V222.2H548V231.5H547V225.9H546V220H545V205.8H544V204.6H543V220H542V203.4H541V204.2H540V208.8H538V216.1H536V200.9H535V215.4H533V216.7H531V204.3H529V203.7H528V201.3H527V200.6H526V203.7H525V212.3H524V201.4H523V201.3H522V210.2H520V201H518V221.4H516V201.8H515V222.4H514V200.5H513V220.1H512V200.7H511V200.4H510V223.7H509V201.1H508V204H507V202.4H505V213.9H503V219.5H502V204.3H501V201.1H499V205.2H498V200.6H497V202.4H496V206.8H495V207.3H494V212.4H493V213.6H492V211H491V212.2H489V203.6H488V214.8H487V204.7H486V204.5H485V207.9H484V204.1H483V213.7H481V213.9H479V204H478V205.2H476V200.9H475V212.9H474V205.7H472V203.6H470V202.2H468V209H467V214.1H465V201H463V227H462V221.6H461V210.3H460V209.8H459V204H457V205.7H456V221.5H455V202.4H453V211.5H452V216.8H450V205H448V204.2H446V204.9H444V202.9H443V217.5H442V216.9H441V216H439V221.8H437V217H435V205.8H434V224.3H432V227.1H430V220.1H428V211.1H427V201.7H426V219H425V222.1H424V219.3H423V205.2H422V203.4H421V204.4H419V211.6H417V204.8H416V224.8H415V206.8H414V204.6H413V206.6H412V242.4H411V217H409V235.4H408V226.4H406V228.3H405V225H404V206H402V207.8H401V228.3H400V206.5H398V223.7H397V211.9H395V241.7H393V220.2H391V216.7H389V228.1H388V238.6H386V224.5H385V207.4H384V220.1H382V240.9H381V217.2H380V217.2H379V207.9H378V206.6H376V226.4H375V206.7H374V209H373V243.9H372V222.3H371V215.7H370V210.3H369V221.5H367V207.4H365V224.4H364V229.5H362V208H361V226.7H360V222.7H358V227.1H357V208.8H356V208.3H355V224.2H354V223.2H353V230.8H352V222.2H351V237.5H350V208.8H348V206H347V210.1H346V206.8H345V238.7H344V214.1H343V218.6H342V207.7H341V206.8H340V209.3H339V216.7H338V211.2H337V231.3H336V210.3H335V216.3H334V206.3H333V210.4H332V204.9H331V215.9H330V205.4H329V209.3H328V210.1H326V242.1H325V225.7H324V209.5H323V215.7H321V207.2H319V227.9H318V212.1H316V209.9H314V207.5H313V209.9H311V236.3H310V217.3H309V205.3H308V228.9H306V243.3H304V207.6H303V208.2H302V208.7H301V238.9H299V228.2H298V240H297V211.3H295V231.6H294V226.4H293V223.4H292V207.3H291V211.3H290V209.8H288V209.7H286V207.1H285V206.6H284V206.6H283V224.3H282V209.6H281V206.8H280V232.4H279V222.7H278V226.2H276V237.2H275V208.3H274V240.8H272V229.8H271V208H270V238.1H269V220.5H268V209.8H266V206H264V205H263V203.6H262V207.2H261V203.8H259V209.3H258V218H257V199.7H256V206.5H255V201.9H253V200.2H252V211H251V210.4H249V199.1H248V198.8H247V200.2H245V201.6H244V201.9H243V201.4H242V216.8H240V200.8H239V216.3H237V199.9H236V205.5H235V200.2H234V214.7H233V210.1H232V198.9H231V208.6H229V211.8H228V199.3H227V202.3H226V198.6H224V217.7H223V210.6H222V207.8H221V210.2H220V200.9H219V199.8H218V199.6H217V205H215V202.7H214V214.7H213V213.7H212V199.9H210V212.7H209V200H208V201.4H207V198.4H206V198.7H205V206.4H204V207.6H203V213H201V204H199V212.2H197V205.2H195V198.5H194Z" fill="#6264d4"/><path d="M194 333.5V323.8H196V312.9H197V311.5H198V323.4H200V306.7H202V306.8H203V303.4H204V324.3H205V324.5H206V314.4H207V307.5H208V304.7H209V321.7H210V312.8H211V322.6H212V323.8H213V311.6H214V311.6H216V324.4H217V320.7H218V311.7H219V323.1H221V299.6H222V307.8H223V309.6H224V324.2H225V315.9H226V322.2H227V325H228V303.7H230V323.8H231V305.3H232V322.4H233V317.1H235V298.5H237V322.8H238V311.8H239V307.3H241V316.3H242V301H244V324H245V324.3H247V311.5H248V310.7H249V319.7H250V299.8H252V317H254V296.3H256V309.6H257V302.5H259V316.8H261V280.1H263V316.6H264V284.4H265V279H266V282.2H268V315.8H269V315.6H270V286.4H272V278H273V315.1H275V304.6H277V301.4H278V300.1H279V314.5H280V303.8H281V281.9H283V282H284V313.2H286V313.2H287V294.6H289V313.6H291V314.9H293V284.3H294V306.2H295V314.8H296V312.9H297V318.3H298V296.5H299V297.1H300V313.9H301V302H303V284.1H305V312.9H307V283.6H308V294.5H310V286.7H311V294.7H312V291.5H313V277.5H315V314.4H316V318H317V317.6H319V277.7H320V313.8H322V296.1H323V287.5H324V295.7H325V283H326V315.2H327V313.8H329V300.7H330V297H331V308.6H333V312.5H334V282.1H336V297.7H337V299.9H338V290.6H339V316.4H340V299.9H342V286.6H344V313.7H345V306.2H347V312.9H348V310.8H349V315H350V318.6H351V285.9H352V312.7H353V313.1H354V300.9H355V296.6H356V312.8H357V282.4H358V296.8H359V281.4H360V275.6H361V315.2H363V312.9H365V301.2H366V285H367V300.4H368V291.1H370V314.3H372V317H373V291.8H374V317H375V282.2H376V293.2H378V316.9H380V318H381V317H382V276.3H383V280.7H384V301.6H385V301.8H386V314.7H388V287.4H389V279.5H390V276.4H392V295.1H394V293.4H395V284.4H396V283H397V293.6H398V280.1H399V315.3H400V313.7H401V304.4H402V300.8H403V291.5H405V287H406V297.1H408V294.6H410V297H411V300H413V314.5H414V318.9H415V286.2H416V294.2H417V305.2H419V279.5H420V318H421V283.7H423V302.8H425V300.4H426V305H427V302.1H428V308.8H429V306.1H431V318H432V305H434V299.6H435V314H436V321.5H438V313H439V291.2H441V292.3H442V317.4H443V294.5H444V303.2H445V308.8H446V318.2H447V320.9H448V317.8H449V304.8H450V313.8H451V319.8H452V308.4H453V315.8H455V321H456V320.6H457V306.1H458V319.9H459V320H460V305.3H461V299.5H462V314.5H463V308.9H464V321.7H465V320.9H466V310.3H468V296.7H470V318.4H471V321.6H472V318.6H473V318.3H474V311.4H475V318.5H476V298.7H478V298.7H480V311.5H481V322.2H482V313.1H483V312.3H484V319.2H485V305H487V310.9H488V322.3H489V312.4H490V317H491V301.1H492V322.6H493V304.5H494V304.6H495V314.5H497V318H499V307.9H500V322.7H502V318.1H503V319.5H504V302.5H505V304.5H507V322.5H508V319.1H509V304.6H510V311.1H511V319.4H512V319.3H514V321.7H515V299.2H516V319.3H517V300.7H518V304.4H519V319.2H521V309.4H522V320H523V309.4H524V298.3H525V311.2H526V312.3H527V304.5H528V304.7H529V322.6H530V299.8H532V313.8H533V299.1H535V320.9H536V322.3H538V311.2H540V321.2H541V320.3H543V317.3H544V298.2H545V302H547V308.6H548V300.7H549V305.7H550V297.6H551V297H552V298.3H554V317.2H556V307.9H557V312.2H558V314H559V295.6H560V313.7H561V293.3H562V314.6H564V314.7H565V314.9H567V314.4H568V314.2H570V302.7H571V277.9H572V279.6H573V286.5H575V315.8H577V297.8H578V294.9H579V313.9H580V293H581V316.1H582V317.5H583V304.6H584V285.7H586V307.3H587V297.4H588V312.7H589V280.5H590V316.2H592V301.8H593V301.3H594V291.5H595V314.5H596V299.8H598V287.3H600V299.5H601V288.7H603V277.7H604V305.7H606V315.6H608V286.8H610V296.7H611V294.2H612V295.8H613V303.8H614V287.3H615V297.7H616V279.9H617V317H618V294H619V287.3H620V302H622V299.5H623V284.7H624V290.8H625V290.4H626V289.8H627V305.3H629V283.7H630V289.9H631V297.8H632V314.2H633V276.2H634V301H635V297.4H637V316.2H638V299.7H639V305.9H640V306.9H641V317.9H643V310.6H644V313H646V314.3H647V312.9H648V315.6H650V288.7H652V317.5H654V299.7H655V316.3H656V313.9H658V317.2H659V275.4H660V316.9H661V297.7H662V313.8H663V291.7H664V300.3H665V301.7H666V290.7H667V315.3H668V292.6H669V304.8H670V315H672V302.4H673V314.5H674V280.9H675V274.4H676V276.7H677V295.9H679V314.2H680V279.5H681V296.2H683V315.9H685V316.5H686V316.2H687V313.9H688V309.5H689V283.7H690V296.2H691V294.4H692V280.6H693V314.1H694V315.1H695V291.9H696V312.4H697V316.2H698V302.6H699V293.8H701V302.7H703V315.8H704V314.4H705V316.1H706V303.4H707V303.5H708V308.9H709V305.6H711V314.3H712V316.4H713V289.5H715V309.8H716V303.1H718V319.3H719V312.1H720V319.5H721V301H722V295.5H723V321.2H724V307.5H725V317.4H726V319.7H727V305.9H728V298.6H730V321.5H731V317.7H733V320.6H735V314.4H737V319.6H738V318.4H740V314.8H741V322.3H743V304.8H744V311.6H745V315.2H746V320.9H747V313.4H748V303.5H749V310.8H750V321.3H751V320.1H753V314.9H754V306.6H755V323.2H757V322.7H759V307.6H760V321.9H762V320H764V314.9H765V319.8H767V320.4H769V303.6H771V323.3H773V301.1H774V317.5H775V319.3H776V312.6H778V304.3H779V316.1H780V311.7H781V319.6H782V313.8H783V313.4H784V303H785V311.7H786V299.3H788V298.9H789V286.8H791V310.2H793V313.2H794V317H796V315.1H797V283.5H798V315.9H799V279.3H800V303.2H801V275.4H802V317.4H803V299.3H804V313.4H806V315.3H808V303.7H810V314.4H811V282.7H813V299.7H814V313.4H815V313.9H816V283.4H817V296.5H819V307.8H820V313.9H822V317.7H824V278.6H825V281.2H826V317.5H828V313.8H829V313.7H830V302.6H831V302H833V316.9H834V314.4H835V287H836V292.3H837V318.5H839V280.2H840V314.8H841V308.7H842V307.4H843V318.9H844V304.9H845V315H846V300.9H847V317.4H848V284.7H850V288.2H851V291.6H852V298H853V289.1H854V315.1H855V319.2H857V283.9H858V316.1H859V300.5H860V287.9H862V319H864V291.9H865V298.3H866V284.1H868V313.6H869V308.4H870V295.9H871V313.8H873V300.1H875V316.4H877V310.3H878V316.6H879V306.5H880V297.8H881V284.7H882V311.2H883V308.8H884V301.5H886V283.3H888V299.5H889V309.6H891V316.4H892V290.7H893V289.2H894V317H895V314.4H896V315.6H897V305.2H898V301H899V284.2H900V314.8H902V314.8H903V314.7H904V317.9H906V294.8H907V318.1H909V287.7H910V291H912V316.7H913V301.1H914V314.4H915V277.8H916V314.8H917V276.4H918V283H919V316.8H921V317.3H922V298.5H923V302.6H924V312.8H925V313.1H926V313H927V284.3H929V299.2H930V295H932V301.2H933V287.9H934V299.7H935V314.4H936V318.6H938V318.4H939V317.4H941V289.7H942V302.3H944V316.6H945V305.6H946V276.7H947V279.1H948V316.7H949V294.2H951V317H952V295.8H953V309.8H954V308.8H955V275.3H956V275.7H957V318.4H958V295.6H960V313H961V298.8H962V286.4H964V313.3H965V290.7H967V304.6H968V318.6H969V318.6H971V306H972V317.2H973V316H974V316.4H975V315.8H976V295.3H977V278.3H978V292.2H980V296.8H981V290.3H982V314.6H983V281.9H984V300.1H986V318.4H987V295.1H988V289.6H989V294.5H990V285.9H992V313.8H993V317.7H994V286.1H996V292.4H997V305.8H998V308.6H1000V303.2H1001V278.8H1002V314.9H1003V312.8H1004V283H1006V296H1008V284.9H1010V276.4H1011V282.3H1012V316.3H1014V289.5H1016V287.4H1017V316.4H1018V315.3H1019V281.3H1021V296.2H1023V298.1H1024V313.3H1025V307.1H1027V282H1028V298.4H1029V289.5H1030V314.9H1031V318.3H1032V298.6H1033V316.2H1034V314.7H1035V304.5H1037V285.7H1038V311.1H1039V312.4H1041V277.5H1043V291.3H1044V289.9H1045V284.5H1047V315H1049V290.5H1050V291.6H1051V275.6H1052V279.5H1054V306.9H1055V298H1057V298H1058V285H1059V303.6H1060V318.7H1061V311.4H1062V298.7H1064V305.6H1066V318.6H1067V279.8H1068V312.8H1070V284.8H1071V314.2H1072V316.2H1074V304.7H1076V318H1077V318.6H1078V314.9H1079V300.1H1080V316.5H1081V297.3H1082V289.1H1083V314.3H1085V298.8H1086V312.7H1087V313.3H1088V324.9H1089V316.7H1091V311.9H1093V324.1H1094V317.5H1095V311.7H1097V314.1H1099V326H1100V325.5H1102V321.6H1104V326.6H1105V326.6H1106V321.1H1107V321.8H1109V319.8H1110V328.1H1111V326.4H1113V323.8H1114V328.6H1115V327.7H1116V328.8H1118V323.7H1120V326.7H1122V328.8H1124V329.5H1125V330.5H1126V328.9H1128V329.3H1129V328.6H1130V330.9H1131V331.1H1132V330.1H1134V331.2H1135V331.8H1137V331.7H1139V331.5H1140V331.8H1141V332.1H1142V332.3H1143V332.3H1145V332.5H1146V332.6H1147V332.5H1148V332.6H1149V332.6H1150V332.7H1151V332.6H1152V332.6H1154V332.7H1156V332.7H1157V332.7H1158V332.8H1160V333.5V334.3H1158V334.3H1157V334.2H1156V334.3H1154V334.4H1152V334.4H1151V334.5H1150V334.4H1149V334.4H1148V334.4H1147V334.4H1146V334.4H1145V334.5H1143V334.7H1142V334.8H1141V335H1140V334.8H1139V335.7H1137V335.5H1135V335.5H1134V335.4H1132V335.6H1131V336H1130V337.5H1129V335.9H1128V338.7H1126V338.3H1125V338.7H1124V337.9H1122V341.3H1120V338.2H1118V338.6H1116V338.6H1115V342.6H1114V343H1113V343.3H1111V340.4H1110V347.9H1109V341.2H1107V341.4H1106V341.6H1105V340.9H1104V343.5H1102V342.9H1100V341.1H1099V341.3H1097V346.7H1095V344.4H1094V343.1H1093V350.4H1091V356.7H1089V350.3H1088V343.3H1087V343.8H1086V359.7H1085V351.4H1083V372.9H1082V350.8H1081V360.1H1080V364.6H1079V366.1H1078V348.1H1077V347.8H1076V350.3H1074V349.1H1072V388H1071V374.3H1070V350.6H1068V353.4H1067V384.1H1066V352.5H1064V352.4H1062V361.4H1061V383.8H1060V369.5H1059V389.2H1058V377.3H1057V385.8H1055V388.4H1054V382.7H1052V378.3H1051V353.4H1050V388.5H1049V369.2H1047V349.7H1045V386.2H1044V348.6H1043V386.2H1041V351.7H1039V353.7H1038V386.5H1037V364.3H1035V355.3H1034V379.7H1033V373.2H1032V382.7H1031V348.2H1030V368.8H1029V363.1H1028V373.8H1027V375H1025V351.3H1024V349H1023V362.1H1021V384.7H1019V362.2H1018V350.8H1017V352.3H1016V353.2H1014V387.3H1012V366.1H1011V377.9H1010V367.9H1008V353.6H1006V378.1H1004V370.2H1003V387H1002V364.7H1001V351.1H1000V354.9H998V350.9H997V373H996V349.1H994V348.4H993V368.8H992V369.2H990V370.2H989V350.2H988V349H987V378.5H986V358.1H984V363H983V350.1H982V368.7H981V389H980V387.9H978V355.3H977V381.8H976V370.6H975V349.8H974V374.7H973V353.2H972V387H971V350.7H969V370.4H968V363.3H967V369.5H965V352.6H964V375.4H962V369.4H961V381.9H960V353.1H958V351.9H957V351.4H956V348.8H955V367.5H954V350.9H953V375.8H952V386H951V375.6H949V349.8H948V373.5H947V373.3H946V367.8H945V352.3H944V383.7H942V369.4H941V348.1H939V361.4H938V368.1H936V373.5H935V352.2H934V369.5H933V369.4H932V350.3H930V351H929V352.5H927V371.8H926V347.6H925V354.5H924V388.7H923V350.2H922V364H921V352.5H919V350.4H918V365.5H917V369.6H916V350.6H915V351.2H914V385.5H913V347.4H912V351.5H910V362.5H909V361.9H907V375.7H906V381.8H904V352.2H903V353.6H902V374.2H900V370.9H899V359.1H898V363.9H897V348.3H896V354.5H895V351.1H894V356.2H893V352.6H892V377.4H891V369.8H889V349.7H888V349.1H886V347.3H884V382H883V351.3H882V370.2H881V360.7H880V347.4H879V373.2H878V380.4H877V348.6H875V348.6H873V379.4H871V374.8H870V381.3H869V369.7H868V384.6H866V377.8H865V364.4H864V377.8H862V372.2H860V348.1H859V366.1H858V367.1H857V386.1H855V356.5H854V371H853V367H852V367H851V384.8H850V352.5H848V369.1H847V364.2H846V349.7H845V377H844V369.5H843V365.5H842V351.3H841V381.1H840V349.1H839V353.8H837V351.5H836V385H835V348.4H834V350.4H833V350.5H831V366.7H830V352.6H829V365.7H828V351.2H826V357.8H825V376.8H824V348H822V362.8H820V353.6H819V353H817V372.9H816V368.6H815V370.1H814V360.7H813V349.4H811V361.2H810V351.2H808V356.3H806V359.3H804V377.5H803V351.9H802V351.6H801V367.6H800V348.8H799V349.3H798V347.5H797V375.9H796V348H794V360.6H793V350.8H791V375.1H789V348.6H788V366H786V348.4H785V357.9H784V354.2H783V363.1H782V343.2H781V343.3H780V343.5H779V346.7H778V343.3H776V352.7H775V360.2H774V346.7H773V344.7H771V347.8H769V353.9H767V352.9H765V361.5H764V349.7H762V360.1H760V359.1H759V346.5H757V356.7H755V343.5H754V344.9H753V363.7H751V345.8H750V358.7H749V344.9H748V358.4H747V346.3H746V345H745V348.1H744V344.1H743V357.2H741V346.3H740V345.6H738V362H737V366.3H735V344.8H733V356.5H731V346.5H730V357.4H728V373.1H727V361.3H726V345.5H725V348.2H724V363.1H723V350.1H722V359H721V360.9H720V349.2H719V360.3H718V346.8H716V354.3H715V372.2H713V350H712V351.7H711V379.6H709V348.4H708V350.7H707V346.9H706V350.2H705V351.8H704V350.7H703V378.9H701V355.5H699V349.3H698V371.5H697V350.5H696V359.4H695V351.8H694V357.6H693V366.6H692V373.8H691V350.6H690V348.8H689V387.1H688V384.5H687V350.1H686V368.8H685V378H683V376.7H681V357.6H680V352.6H679V348.1H677V374.3H676V379.9H675V390.5H674V373.5H673V348.7H672V367.4H670V353.1H669V352.7H668V350.4H667V363.3H666V350H665V387H664V355.7H663V356.1H662V359H661V347.7H660V389.8H659V353.6H658V347.9H656V376H655V349.7H654V354.4H652V356.3H650V381.4H648V366.3H647V352.3H646V352H644V372.9H643V373.4H641V359.2H640V351.5H639V347.7H638V350.5H637V347.6H635V350.6H634V348H633V364.3H632V351.3H631V380H630V375.2H629V384.3H627V357.1H626V348.5H625V352.8H624V364.4H623V367.9H622V353.3H620V375.6H619V380.9H618V372.4H617V374.8H616V349.2H615V360.8H614V370.2H613V368.5H612V351H611V373.6H610V373H608V381H606V347.7H604V349.7H603V373.4H601V351.3H600V348.8H598V381.3H596V382.2H595V373.9H594V352.3H593V378.5H592V351.3H590V387.7H589V387H588V367.9H587V350.8H586V382.9H584V350.1H583V348H582V375.1H581V369.9H580V364.3H579V352.7H578V353.1H577V371.6H575V365.4H573V376.7H572V353.2H571V387.5H570V382.9H568V384.1H567V352.8H565V383.4H564V349.9H562V370.7H561V353.6H560V369.2H559V350H558V369.9H557V365H556V353H554V378.8H552V352.8H551V373.5H550V357.7H549V358.9H548V359H547V362H545V355.5H544V363.4H543V359.2H541V357.5H540V354.1H538V344H536V355.7H535V356.3H533V355.4H532V349.6H530V352H529V360.8H528V347.4H527V363.1H526V347.6H525V346.8H524V345.6H523V362.1H522V353.9H521V345.3H519V347.1H518V345H517V351.9H516V352.9H515V361.1H514V353.5H512V346.3H511V347.4H510V367.2H509V343.7H508V344.4H507V346.1H505V347.5H504V345H503V351.8H502V346.9H500V362.3H499V345.5H497V347.6H495V345.5H494V344.4H493V353.5H492V344.4H491V346.3H490V356H489V365.7H488V358.8H487V345.5H485V366.5H484V346.6H483V368.3H482V366.1H481V347.8H480V369.2H478V366.1H476V354.6H475V344.3H474V361.9H473V344.5H472V348H471V354.9H470V364.6H468V345H466V351.4H465V353.7H464V366.3H463V362.4H462V355.2H461V346.3H460V371.4H459V371.1H458V348.3H457V363.6H456V351.9H455V359.1H453V351.7H452V345.3H451V358.5H450V348.3H449V357.8H448V347.4H447V370.4H446V352.3H445V347H444V362.6H443V366.2H442V374.1H441V348.3H439V347.9H438V345.9H436V366.1H435V359.7H434V358H432V369.4H431V347.8H429V372.3H428V358H427V348.6H426V361.6H425V346.5H423V346.3H421V350.8H420V373.1H419V369.3H417V370.5H416V367.8H415V370.9H414V353.2H413V351.6H411V350.3H410V365.4H408V375.9H406V374.3H405V348.3H403V352.1H402V349.5H401V352.4H400V363.7H399V349.9H398V374.8H397V376.3H396V380.4H395V391.5H394V349.6H392V375.6H390V354.4H389V354.3H388V353.1H386V349.4H385V349.2H384V371.1H383V354.3H382V369.7H381V354.1H380V390.1H378V355.3H376V361.9H375V378.7H374V350.5H373V388.3H372V352.8H370V372.7H368V353.4H367V350.1H366V348.1H365V356.4H363V362.5H361V353.3H360V367.5H359V353.5H358V375.1H357V365.6H356V387.2H355V351.1H354V385.1H353V353.3H352V367.3H351V376.5H350V388.6H349V352.2H348V350.6H347V348.6H345V353.1H344V370.6H342V353.1H340V385.5H339V350H338V367.8H337V373.8H336V359.6H334V348.8H333V349.1H331V367.1H330V353.4H329V353.1H327V350.8H326V352.9H325V366.4H324V367.7H323V372.2H322V353.8H320V368.6H319V353.7H317V359.9H316V384.7H315V383.2H313V366.1H312V352.4H311V349.9H310V369.3H308V359.2H307V377.8H305V379.7H303V352.8H301V369.6H300V371.1H299V386H298V381.7H297V370.9H296V384.7H295V383.7H294V388.9H293V385.3H291V382.8H289V360.3H287V376.3H286V384.7H284V387H283V368.8H281V349.1H280V381.4H279V350.4H278V351.9H277V354.4H275V387.6H273V351.2H272V381.6H270V353.2H269V348.1H268V369.2H266V370.9H265V354.7H264V373.4H263V358H261V366.7H259V344.7H257V350.6H256V345.4H254V355.5H252V354.5H250V343.6H249V345.4H248V344.2H247V352.4H245V346.8H244V350.6H242V342.6H241V345H239V357.3H238V344.6H237V358.9H235V342.8H233V353.7H232V367.7H231V343.2H230V344.4H228V342H227V357.7H226V360.8H225V362.2H224V354.6H223V342.9H222V343.5H221V343.2H219V363.3H218V353.3H217V353.5H216V358.6H214V341.9H213V343.3H212V342H211V353.8H210V342.3H209V346.3H208V362.9H207V354.4H206V342.2H205V349.8H204V351.4H203V351.7H202V349.5H200V341.7H198V350.4H197V341.2H196V355.8H194Z" fill="#6264d4"/></svg><svg style="left:13px;top:109.500px" width="9" height="9" stroke="#111" stroke-width="1"><path d="M.4.400l8.200 8.200M8.600.4l-8.200 8.200"/></svg><div class="t" style="left:30px;top:108px;font-size:12.600px">77569_Spand...</div><svg style="left:124.500px;top:110.800px" width="10" height="6" fill="none" stroke="#111" stroke-width="1"><path d="M.4 5.400l4.300-4.600 4.300 4.600"/></svg><svg style="left:141.500px;top:112.500px" width="14" height="3"><circle cx="1.500" cy="1.500" r=".95" fill="#222"/><circle cx="6.300" cy="1.500" r=".95" fill="#222"/><circle cx="11.100" cy="1.500" r=".95" fill="#222"/></svg><div class="abs" style="left:9px;top:124px;width:71px;height:20px;background:#c8d3e4;border-radius:3px;text-align:center;font-size:12.200px;-webkit-text-stroke:.2px #1a1a1e;line-height:21px">Mute</div><div class="abs" style="left:85px;top:124px;width:71px;height:20px;background:#c8d3e4;border-radius:3px;text-align:center;font-size:12.200px;-webkit-text-stroke:.2px #1a1a1e;line-height:21px">Solo</div><div class="abs" style="left:9px;top:147px;width:147px;height:23px;background:#c8d3e4;border-radius:3px;text-align:center;font-size:12.200px;-webkit-text-stroke:.2px #1a1a1e;line-height:24px">Effects</div><div class="t" style="left:15.500px;top:171.500px;font-size:9px;font-weight:bold">&#8211;</div><div class="t" style="left:142px;top:172.500px;font-size:9px;font-weight:bold">+</div><div class="t" style="left:15px;top:200.500px;font-size:7.500px;font-weight:bold;color:#5a5a5a">L</div><div class="t" style="left:142.500px;top:200.500px;font-size:7.500px;font-weight:bold;color:#5a5a5a">R</div><div class="abs" style="left:16px;top:186px;width:134px;height:1px;background:#b4c0d4"></div><div class="abs" style="left:16.0px;top:183px;width:1px;height:3px;background:#e9effa"></div><div class="abs" style="left:22.6px;top:184px;width:1px;height:2px;background:#e9effa"></div><div class="abs" style="left:29.3px;top:184px;width:1px;height:2px;background:#e9effa"></div><div class="abs" style="left:36.0px;top:184px;width:1px;height:2px;background:#e9effa"></div><div class="abs" style="left:42.6px;top:184px;width:1px;height:2px;background:#e9effa"></div><div class="abs" style="left:49.2px;top:183px;width:1px;height:3px;background:#e9effa"></div><div class="abs" style="left:55.9px;top:184px;width:1px;height:2px;background:#e9effa"></div><div class="abs" style="left:62.6px;top:184px;width:1px;height:2px;background:#e9effa"></div><div class="abs" style="left:69.2px;top:184px;width:1px;height:2px;background:#e9effa"></div><div class="abs" style="left:75.8px;top:184px;width:1px;height:2px;background:#e9effa"></div><div class="abs" style="left:82.5px;top:183px;width:1px;height:3px;background:#e9effa"></div><div class="abs" style="left:89.2px;top:184px;width:1px;height:2px;background:#e9effa"></div><div class="abs" style="left:95.8px;top:184px;width:1px;height:2px;background:#e9effa"></div><div class="abs" style="left:102.5px;top:184px;width:1px;height:2px;background:#e9effa"></div><div class="abs" style="left:109.1px;top:184px;width:1px;height:2px;background:#e9effa"></div><div class="abs" style="left:115.8px;top:183px;width:1px;height:3px;background:#e9effa"></div><div class="abs" style="left:122.4px;top:184px;width:1px;height:2px;background:#e9effa"></div><div class="abs" style="left:129.1px;top:184px;width:1px;height:2px;background:#e9effa"></div><div class="abs" style="left:135.7px;top:184px;width:1px;height:2px;background:#e9effa"></div><div class="abs" style="left:142.4px;top:184px;width:1px;height:2px;background:#e9effa"></div><div class="abs" style="left:149.0px;top:183px;width:1px;height:3px;background:#e9effa"></div><div class="abs" style="left:76.500px;top:180px;width:12.500px;height:12.500px;border-radius:50%;border:1.200px solid #222;background:#fbf9f5"></div><div class="abs" style="left:16px;top:217px;width:134px;height:1px;background:#b4c0d4"></div><div class="abs" style="left:16.0px;top:214px;width:1px;height:3px;background:#e9effa"></div><div class="abs" style="left:22.6px;top:215px;width:1px;height:2px;background:#e9effa"></div><div class="abs" style="left:29.3px;top:215px;width:1px;height:2px;background:#e9effa"></div><div class="abs" style="left:36.0px;top:215px;width:1px;height:2px;background:#e9effa"></div><div class="abs" style="left:42.6px;top:215px;width:1px;height:2px;background:#e9effa"></div><div class="abs" style="left:49.2px;top:214px;width:1px;height:3px;background:#e9effa"></div><div class="abs" style="left:55.9px;top:215px;width:1px;height:2px;background:#e9effa"></div><div class="abs" style="left:62.6px;top:215px;width:1px;height:2px;background:#e9effa"></div><div class="abs" style="left:69.2px;top:215px;width:1px;height:2px;background:#e9effa"></div><div class="abs" style="left:75.8px;top:215px;width:1px;height:2px;background:#e9effa"></div><div class="abs" style="left:82.5px;top:214px;width:1px;height:3px;background:#e9effa"></div><div class="abs" style="left:89.2px;top:215px;width:1px;height:2px;background:#e9effa"></div><div class="abs" style="left:95.8px;top:215px;width:1px;height:2px;background:#e9effa"></div><div class="abs" style="left:102.5px;top:215px;width:1px;height:2px;background:#e9effa"></div><div class="abs" style="left:109.1px;top:215px;width:1px;height:2px;background:#e9effa"></div><div class="abs" style="left:115.8px;top:214px;width:1px;height:3px;background:#e9effa"></div><div class="abs" style="left:122.4px;top:215px;width:1px;height:2px;background:#e9effa"></div><div class="abs" style="left:129.1px;top:215px;width:1px;height:2px;background:#e9effa"></div><div class="abs" style="left:135.7px;top:215px;width:1px;height:2px;background:#e9effa"></div><div class="abs" style="left:142.4px;top:215px;width:1px;height:2px;background:#e9effa"></div><div class="abs" style="left:149.0px;top:214px;width:1px;height:3px;background:#e9effa"></div><div class="abs" style="left:76.500px;top:211px;width:12.500px;height:12.500px;border-radius:50%;border:1.200px solid #222;background:#fbf9f5"></div><div class="t" style="left:128.500px;top:121.5px;width:59px;text-align:right;font-size:12.300px;font-weight:bold;-webkit-text-stroke:.25px #1a1a1e;">1.0</div><div class="t" style="left:128.500px;top:150.5px;width:59px;text-align:right;font-size:12.300px;">0.5</div><div class="t" style="left:128.500px;top:184.7px;width:59px;text-align:right;font-size:12.300px;font-weight:bold;-webkit-text-stroke:.25px #1a1a1e;">0.0</div><div class="t" style="left:128.500px;top:219.2px;width:59px;text-align:right;font-size:12.300px;">-0.5</div><div class="t" style="left:128.500px;top:247.0px;width:59px;text-align:right;font-size:12.300px;font-weight:bold;-webkit-text-stroke:.25px #1a1a1e;">-1.0</div><div class="t" style="left:128.500px;top:262.3px;width:59px;text-align:right;font-size:12.300px;font-weight:bold;-webkit-text-stroke:.25px #1a1a1e;">1.0</div><div class="t" style="left:128.500px;top:292.7px;width:59px;text-align:right;font-size:12.300px;">0.5</div><div class="t" style="left:128.500px;top:327.6px;width:59px;text-align:right;font-size:12.300px;font-weight:bold;-webkit-text-stroke:.25px #1a1a1e;">0.0</div><div class="t" style="left:128.500px;top:364.0px;width:59px;text-align:right;font-size:12.300px;">-0.5</div><div class="t" style="left:128.500px;top:391.6px;width:59px;text-align:right;font-size:12.300px;font-weight:bold;-webkit-text-stroke:.25px #1a1a1e;">-1.0</div><div class="abs" style="left:190px;top:156px;width:4px;height:1px;background:#111"></div><div class="abs" style="left:190px;top:190px;width:4px;height:1px;background:#111"></div><div class="abs" style="left:190px;top:225px;width:4px;height:1px;background:#111"></div><div class="abs" style="left:190px;top:298px;width:4px;height:1px;background:#111"></div><div class="abs" style="left:190px;top:333px;width:4px;height:1px;background:#111"></div><div class="abs" style="left:190px;top:370px;width:4px;height:1px;background:#111"></div><div class="abs" style="left:0;top:615px;width:1200px;height:16px;background:#f5f5f5"></div><div class="abs" style="left:0;top:615px;width:197px;height:16px;background:#ebebeb"></div><div class="abs" style="left:221px;top:620.500px;width:805px;height:8.500px;border-radius:5px;background:#6e6e6e"></div><div class="abs" style="left:0;top:631px;width:1200px;height:68px;background:#f7f7f8"></div><div class="abs" style="left:0;top:631px;width:1200px;height:1px;background:#ececef"></div><div class="grab"><i style="left:2.6px;top:656.5px"></i><i style="left:7.7px;top:656.5px"></i><i style="left:2.6px;top:661.8px"></i><i style="left:7.7px;top:661.8px"></i><i style="left:2.6px;top:667.1px"></i><i style="left:7.7px;top:667.1px"></i></div><div class="grab"><i style="left:219.8px;top:656.5px"></i><i style="left:224.9px;top:656.5px"></i><i style="left:219.8px;top:661.8px"></i><i style="left:224.9px;top:661.8px"></i><i style="left:219.8px;top:667.1px"></i><i style="left:224.9px;top:667.1px"></i></div><div class="grab"><i style="left:397.8px;top:656.5px"></i><i style="left:402.9px;top:656.5px"></i><i style="left:397.8px;top:661.8px"></i><i style="left:402.9px;top:661.8px"></i><i style="left:397.8px;top:667.1px"></i><i style="left:402.9px;top:667.1px"></i></div><div class="grab"><i style="left:657.2px;top:656.5px"></i><i style="left:662.3px;top:656.5px"></i><i style="left:657.2px;top:661.8px"></i><i style="left:662.3px;top:661.8px"></i><i style="left:657.2px;top:667.1px"></i><i style="left:662.3px;top:667.1px"></i></div><div class="grab"><i style="left:906.0px;top:641.2px"></i><i style="left:911.1px;top:641.2px"></i><i style="left:906.0px;top:646.5px"></i><i style="left:911.1px;top:646.5px"></i><i style="left:906.0px;top:651.8px"></i><i style="left:911.1px;top:651.8px"></i></div><div class="t md" style="left:18px;top:646px;font-size:12.300px">Tempo</div><div class="t md" style="left:86px;top:646px;font-size:12.200px">Time Signature</div><div class="fld" style="left:18px;top:664px;width:44px;height:21px"><span style="top:4.500px;font-size:14.500px">120</span></div><div class="fld" style="left:86px;top:664px;width:34px;height:21px"><span style="top:4.500px;font-size:14.500px">4</span></div><div class="abs" style="left:64px;top:664px;width:14px;height:21px;background:#fdfdfd;border-radius:4px;box-shadow:0 .5px 1.500px rgba(0,0,0,.25)"><svg style="left:3px;top:3px" width="8" height="15" fill="none" stroke="#222" stroke-width="1.500" stroke-linecap="round" stroke-linejoin="round"><path d="M1 5l3-3 3 3M1 10l3 3 3-3"/></svg></div><div class="abs" style="left:122px;top:664px;width:14px;height:21px;background:#fdfdfd;border-radius:4px;box-shadow:0 .5px 1.500px rgba(0,0,0,.25)"><svg style="left:3px;top:3px" width="8" height="15" fill="none" stroke="#222" stroke-width="1.500" stroke-linecap="round" stroke-linejoin="round"><path d="M1 5l3-3 3 3M1 10l3 3 3-3"/></svg></div><div class="t" style="left:143px;top:664.500px;font-size:19px">/</div><div class="abs" style="left:157px;top:665px;width:46px;height:19px;background:#fff;border-radius:5px;box-shadow:0 .5px 1.500px rgba(0,0,0,.25)"><span class="t" style="left:11px;top:2.500px;font-size:14.500px">4</span><span class="abs" style="left:29px;top:1.500px;width:16px;height:16px;border-radius:4px;background:#fafafa;box-shadow:0 0 1px rgba(0,0,0,.25)"></span><svg style="left:33px;top:6.500px" width="8" height="6" fill="none" stroke="#222" stroke-width="1.600" stroke-linecap="round" stroke-linejoin="round"><path d="M1 1l3 3 3-3"/></svg></div><div class="abs" style="left:237.200px;top:640.200px;width:14px;height:14px;background:#fff;border-radius:3.500px;box-shadow:0 0 0 .6px #cfcfcf, inset 0 .5px 1px rgba(0,0,0,.08)"></div><div class="t md" style="left:254px;top:640.500px;font-size:11.600px">Snap</div><div class="abs" style="left:236px;top:667px;width:128px;height:21px;background:#fbfbfb;border-bottom:1px solid #e3e3e3;box-shadow:0 0 0 .5px #ececec"><span class="t" style="left:4px;top:4.500px;font-size:14px;color:#bdbdbd">1/8</span></div><div class="abs" style="left:368px;top:668px;width:20px;height:19px;background:#fbfbfb;border-radius:5px;box-shadow:0 .5px 1.500px rgba(0,0,0,.15)"><svg style="left:6px;top:7px" width="8" height="6" fill="none" stroke="#bbb" stroke-width="1.400" stroke-linecap="round" stroke-linejoin="round"><path d="M1 1l3 3 3-3"/></svg></div><div class="abs" style="left:410px;top:648px;width:238px;height:35px;background:#2b2d44"></div><div class="ch" style="left:400.6px;top:652.300px;width:40px;font-size:29px;-webkit-text-stroke:.45px #fff;transform:scaleX(1.080)">0</div><div class="ch" style="left:420.4px;top:652.300px;width:40px;font-size:29px;-webkit-text-stroke:.45px #fff;transform:scaleX(1.080)">0</div><div class="ch" style="left:448.5px;top:652.300px;width:40px;font-size:29px;-webkit-text-stroke:.45px #fff;transform:scaleX(1.080)">h</div><div class="ch" style="left:476.7px;top:652.300px;width:40px;font-size:29px;-webkit-text-stroke:.45px #fff;transform:scaleX(1.080)">0</div><div class="ch" style="left:497.5px;top:652.300px;width:40px;font-size:29px;-webkit-text-stroke:.45px #fff;transform:scaleX(1.080)">0</div><div class="ch" style="left:528.8px;top:652.300px;width:40px;font-size:29px;-webkit-text-stroke:.45px #fff;transform:scaleX(1.080)">m</div><div class="ch" style="left:560.0px;top:652.300px;width:40px;font-size:29px;-webkit-text-stroke:.45px #fff;transform:scaleX(1.080)">0</div><div class="ch" style="left:579.8px;top:652.300px;width:40px;font-size:29px;-webkit-text-stroke:.45px #fff;transform:scaleX(1.080)">0</div><div class="ch" style="left:605.8px;top:652.300px;width:40px;font-size:29px;-webkit-text-stroke:.45px #fff;transform:scaleX(1.080)">s</div><svg style="left:639px;top:663.500px" width="9" height="6"><path d="M.3 0h7.400L4 4.800z" fill="#fff"/></svg><div class="abs" style="left:654px;top:634px;width:1px;height:65px;background:#e8e8eb"></div><div class="t md" style="left:672px;top:641.700px;font-size:12.100px">Selection</div><div class="btn" style="left:698px;top:661px;width:24px;height:23px;background:#e2e2e6"></div><svg style="left:702.0px;top:664.5px" width="16" height="16" viewBox="0 0 16 16" fill="none" stroke="#1a1a1a" stroke-width="1.150" stroke-linejoin="round"><path d="M6.600 1h2.800l.4 1.900 1.200.7 1.800-.6 1.400 2.400-1.400 1.300v1.400l1.400 1.300-1.400 2.400-1.800-.6-1.200.7-.4 1.900H6.600l-.4-1.900-1.200-.7-1.800.6-1.400-2.400 1.400-1.300V7.300L1.800 6 3.200 3.600l1.800.6 1.200-.7z"/><circle cx="8" cy="8" r="2.200"/></svg><div class="abs" style="left:728px;top:640.5px;width:170px;height:18.500px;background:#2b2d44"></div><div class="ch" style="left:724.0px;top:645.1px;width:20px;font-size:13.500px;-webkit-text-stroke:.3px #fff;transform:scaleX(1.120)">0</div><div class="ch" style="left:735.2px;top:645.1px;width:20px;font-size:13.500px;-webkit-text-stroke:.3px #fff;transform:scaleX(1.120)">0</div><div class="ch" style="left:749.2px;top:645.1px;width:20px;font-size:13.500px;-webkit-text-stroke:.3px #fff;transform:scaleX(1.120)">h</div><div class="ch" style="left:763.0px;top:645.1px;width:20px;font-size:13.500px;-webkit-text-stroke:.3px #fff;transform:scaleX(1.120)">0</div><div class="ch" style="left:773.8px;top:645.1px;width:20px;font-size:13.500px;-webkit-text-stroke:.3px #fff;transform:scaleX(1.120)">0</div><div class="ch" style="left:789.5px;top:645.1px;width:20px;font-size:13.500px;-webkit-text-stroke:.3px #fff;transform:scaleX(1.120)">m</div><div class="ch" style="left:805.0px;top:645.1px;width:20px;font-size:13.500px;-webkit-text-stroke:.3px #fff;transform:scaleX(1.120)">0</div><div class="ch" style="left:816.7px;top:645.1px;width:20px;font-size:13.500px;-webkit-text-stroke:.3px #fff;transform:scaleX(1.120)">0</div><div class="ch" style="left:824.2px;top:645.1px;width:20px;font-size:13.500px;-webkit-text-stroke:.3px #fff;transform:scaleX(1.120)">.</div><div class="ch" style="left:831.7px;top:645.1px;width:20px;font-size:13.500px;-webkit-text-stroke:.3px #fff;transform:scaleX(1.120)">0</div><div class="ch" style="left:843.2px;top:645.1px;width:20px;font-size:13.500px;-webkit-text-stroke:.3px #fff;transform:scaleX(1.120)">0</div><div class="ch" style="left:854.5px;top:645.1px;width:20px;font-size:13.500px;-webkit-text-stroke:.3px #fff;transform:scaleX(1.120)">0</div><div class="ch" style="left:867.2px;top:645.1px;width:20px;font-size:13.500px;-webkit-text-stroke:.3px #fff;transform:scaleX(1.120)">s</div><svg style="left:887px;top:647.0px" width="10" height="7"><path d="M0 0h9.500L4.700 5.500z" fill="#fff"/></svg><div class="abs" style="left:728px;top:661.5px;width:170px;height:18.500px;background:#2b2d44"></div><div class="ch" style="left:724.0px;top:666.1px;width:20px;font-size:13.500px;-webkit-text-stroke:.3px #fff;transform:scaleX(1.120)">0</div><div class="ch" style="left:735.2px;top:666.1px;width:20px;font-size:13.500px;-webkit-text-stroke:.3px #fff;transform:scaleX(1.120)">0</div><div class="ch" style="left:749.2px;top:666.1px;width:20px;font-size:13.500px;-webkit-text-stroke:.3px #fff;transform:scaleX(1.120)">h</div><div class="ch" style="left:763.0px;top:666.1px;width:20px;font-size:13.500px;-webkit-text-stroke:.3px #fff;transform:scaleX(1.120)">0</div><div class="ch" style="left:773.8px;top:666.1px;width:20px;font-size:13.500px;-webkit-text-stroke:.3px #fff;transform:scaleX(1.120)">1</div><div class="ch" style="left:789.5px;top:666.1px;width:20px;font-size:13.500px;-webkit-text-stroke:.3px #fff;transform:scaleX(1.120)">m</div><div class="ch" style="left:805.0px;top:666.1px;width:20px;font-size:13.500px;-webkit-text-stroke:.3px #fff;transform:scaleX(1.120)">3</div><div class="ch" style="left:816.7px;top:666.1px;width:20px;font-size:13.500px;-webkit-text-stroke:.3px #fff;transform:scaleX(1.120)">1</div><div class="ch" style="left:824.2px;top:666.1px;width:20px;font-size:13.500px;-webkit-text-stroke:.3px #fff;transform:scaleX(1.120)">.</div><div class="ch" style="left:831.7px;top:666.1px;width:20px;font-size:13.500px;-webkit-text-stroke:.3px #fff;transform:scaleX(1.120)">0</div><div class="ch" style="left:843.2px;top:666.1px;width:20px;font-size:13.500px;-webkit-text-stroke:.3px #fff;transform:scaleX(1.120)">3</div><div class="ch" style="left:854.5px;top:666.1px;width:20px;font-size:13.500px;-webkit-text-stroke:.3px #fff;transform:scaleX(1.120)">7</div><div class="ch" style="left:867.2px;top:666.1px;width:20px;font-size:13.500px;-webkit-text-stroke:.3px #fff;transform:scaleX(1.120)">s</div><svg style="left:887px;top:668.0px" width="10" height="7"><path d="M0 0h9.500L4.700 5.500z" fill="#fff"/></svg><div class="btn" style="left:916px;top:635px;width:27.500px;height:28px;background:#dcdce2"></div><svg style="left:922px;top:641px" width="15" height="15"><path d="M.8.800L14 7.500.8 14.200z" fill="#3e8f5f" stroke="#3e8f5f" stroke-linejoin="round"/></svg><div class="abs" style="left:949px;top:652.200px;width:142px;height:1.200px;background:#bcc8d8"></div><div class="abs" style="left:949.0px;top:648.2px;width:1px;height:4.0px;background:#ccd5e1"></div><div class="abs" style="left:959.1px;top:649.7px;width:1px;height:2.5px;background:#ccd5e1"></div><div class="abs" style="left:969.1px;top:649.7px;width:1px;height:2.5px;background:#ccd5e1"></div><div class="abs" style="left:979.2px;top:649.7px;width:1px;height:2.5px;background:#ccd5e1"></div><div class="abs" style="left:989.3px;top:649.7px;width:1px;height:2.5px;background:#ccd5e1"></div><div class="abs" style="left:999.4px;top:649.7px;width:1px;height:2.5px;background:#ccd5e1"></div><div class="abs" style="left:1009.4px;top:649.7px;width:1px;height:2.5px;background:#ccd5e1"></div><div class="abs" style="left:1019.5px;top:649.7px;width:1px;height:2.5px;background:#ccd5e1"></div><div class="abs" style="left:1029.6px;top:649.7px;width:1px;height:2.5px;background:#ccd5e1"></div><div class="abs" style="left:1039.6px;top:649.7px;width:1px;height:2.5px;background:#ccd5e1"></div><div class="abs" style="left:1049.7px;top:649.7px;width:1px;height:2.5px;background:#ccd5e1"></div><div class="abs" style="left:1059.8px;top:649.7px;width:1px;height:2.5px;background:#ccd5e1"></div><div class="abs" style="left:1069.8px;top:649.7px;width:1px;height:2.5px;background:#ccd5e1"></div><div class="abs" style="left:1079.9px;top:649.7px;width:1px;height:2.5px;background:#ccd5e1"></div><div class="abs" style="left:1090.0px;top:648.2px;width:1px;height:4.0px;background:#ccd5e1"></div><div class="abs" style="left:990.300px;top:646.300px;width:12.400px;height:12.400px;border-radius:50%;border:1.200px solid #222;background:#fff"></div><div class="t" style="left:949px;top:637.500px;font-size:9px;font-weight:bold">&#8211;</div><div class="t" style="left:1082.500px;top:638.500px;font-size:9px;font-weight:bold">+</div><div class="abs" style="left:1099px;top:634px;width:1px;height:31px;background:#e8e8eb"></div><div class="abs" style="left:905px;top:664px;width:295px;height:1px;background:#ededf0"></div><div class="abs" id="dlg" style="left:591px;top:247px;width:609px;height:367px;background:#ececec;border-radius:10px;box-shadow:0 8px 22px rgba(0,0,0,.45),0 0 0 .5px rgba(0,0,0,.35)"><div class="abs" style="left:0;top:0;width:609px;height:29px;background:linear-gradient(#f3f3f4,#f0f0f1);border-radius:10px 10px 0 0"></div><div class="abs" style="left:0;top:29px;width:609px;height:1px;background:#d8d8d8"></div><div class="abs" style="left:8px;top:8px;width:12px;height:12px;border-radius:50%;background:#fe5f57;box-shadow:inset 0 0 0 .5px #e2443d"></div><div class="abs" style="left:29px;top:8px;width:12px;height:12px;border-radius:50%;background:#febc2e;box-shadow:inset 0 0 0 .5px #dfa023"></div><div class="abs" style="left:49px;top:8px;width:12px;height:12px;border-radius:50%;background:#28c840;box-shadow:inset 0 0 0 .5px #1dad2b"></div><div class="t" style="left:0;top:8.0px;width:609px;text-align:center;font-size:13.900px;font-weight:bold;color:#3a3a3a">Compressor</div><div class="mbtn" style="left:6px;top:35.5px;width:135px;height:20.500px;line-height:19.500px;font-size:14.100px">Presets &amp; settings</div><div class="t" style="left:18px;top:72.4px;font-size:12.100px;color:#222">Compression curve</div><div class="abs" style="left:7px;top:88px;width:350.500px;height:119px;background:#e5e5e5;border-radius:5px;box-shadow:0 0 0 .5px #dfdfdf"></div><div class="t" style="left:22px;top:106.8px;font-size:13.950px">Threshold (dB)</div><div class="abs" style="left:142px;top:100px;width:103px;height:26.500px;border-radius:4.500px;background:#7ea6e6"></div><div class="abs" style="left:145px;top:103px;width:97px;height:20.500px;background:#fff"><span class="abs" style="left:3.500px;top:2px;width:32.500px;height:16.500px;background:#b3d1fb"></span><span class="t" style="left:4px;top:3.500px;font-size:14px">-10.0</span></div><div class="sl" style="left:251px;top:110.7px;width:96px"><b style="width:75.0px"></b></div><div class="kn" style="left:318.5px;top:105.0px"></div><div class="t" style="left:22px;top:133.8px;font-size:13.950px">Make-up gain (dB)</div><div class="fld" style="left:145px;top:129.5px;width:97px;height:21px"><span>0.0</span></div><div class="sl" style="left:251px;top:137.7px;width:96px"><b style="width:47.5px"></b></div><div class="kn" style="left:291.0px;top:132.0px"></div><div class="t" style="left:22px;top:160.8px;font-size:13.950px">Knee width (dB)</div><div class="fld" style="left:145px;top:156.5px;width:97px;height:21px"><span>5.0</span></div><div class="sl" style="left:251px;top:164.7px;width:96px"><b style="width:20.5px"></b></div><div class="kn" style="left:264.0px;top:159.0px"></div><div class="t" style="left:22px;top:187.8px;font-size:13.950px">Ratio:</div><div class="fld" style="left:145px;top:183.5px;width:97px;height:21px"><span>10.0</span></div><div class="sl" style="left:251px;top:191.7px;width:96px"><b style="width:51.0px"></b></div><div class="kn" style="left:294.5px;top:186.0px"></div><div class="t" style="left:18px;top:218.2px;font-size:12.100px;color:#222">Smoothing</div><div class="abs" style="left:7px;top:234px;width:350.500px;height:92px;background:#e5e5e5;border-radius:5px;box-shadow:0 0 0 .5px #dfdfdf"></div><div class="t" style="left:22px;top:252.8px;font-size:13.950px;letter-spacing:-.15px">Lookahead (ms)</div><div class="fld" style="left:129px;top:248.5px;width:97px;height:21px"><span>1.0</span></div><div class="sl" style="left:234px;top:256.7px;width:113px"><b style="width:10.0px"></b></div><div class="kn" style="left:236.5px;top:251.0px"></div><div class="t" style="left:22px;top:279.8px;font-size:13.950px;letter-spacing:-.15px">Attack (ms)</div><div class="fld" style="left:129px;top:275.5px;width:97px;height:21px"><span>30.0</span></div><div class="sl" style="left:234px;top:283.7px;width:113px"><b style="width:69.0px"></b></div><div class="kn" style="left:295.5px;top:278.0px"></div><div class="t" style="left:22px;top:306.8px;font-size:13.950px;letter-spacing:-.15px">Release (ms)</div><div class="fld" style="left:129px;top:302.5px;width:97px;height:21px"><span>150.0</span></div><div class="sl" style="left:234px;top:310.7px;width:113px"><b style="width:69.0px"></b></div><div class="kn" style="left:295.5px;top:305.0px"></div><div class="mbtn" style="left:6px;top:341.5px;width:85px;height:20.500px;line-height:19.500px;font-size:13.800px">Preview</div><div class="mbtn" style="left:425px;top:341.5px;width:85px;height:20.500px;line-height:19.500px;font-size:13.800px">Cancel</div><div class="mbtn" style="left:518px;top:341.5px;width:85px;height:20.500px;line-height:19.500px;font-size:14px;color:#fff;-webkit-text-stroke:.3px #fff;background:linear-gradient(#2f8bfb,#0a6cf0);box-shadow:0 .5px 1.500px rgba(0,0,0,.3)">Apply</div><svg style="left:0;top:0" width="609" height="367" viewBox="591 247 609 367"><rect x="963" y="345" width="205" height="153" fill="#f89d98"/><polygon points="963.0,498.0 964.7,496.7 966.4,495.4 968.1,494.2 969.8,492.9 971.5,491.6 973.2,490.4 975.0,489.1 976.7,487.8 978.4,486.5 980.1,485.2 981.8,484.0 983.5,482.7 985.2,481.4 986.9,480.1 988.6,478.9 990.3,477.6 992.0,476.3 993.8,475.0 995.5,473.8 997.2,472.5 998.9,471.2 1000.6,469.9 1002.3,468.7 1004.0,467.4 1005.7,466.1 1007.4,464.9 1009.1,463.6 1010.8,462.3 1012.5,461.0 1014.2,459.8 1016.0,458.5 1017.7,457.2 1019.4,455.9 1021.1,454.6 1022.8,453.4 1024.5,452.1 1026.2,450.8 1027.9,449.6 1029.6,448.3 1031.3,447.0 1033.0,445.7 1034.8,444.4 1036.5,443.2 1038.2,441.9 1039.9,440.6 1041.6,439.4 1043.3,438.1 1045.0,436.8 1046.7,435.5 1048.4,434.2 1050.1,433.0 1051.8,431.7 1053.5,430.4 1055.2,429.1 1057.0,427.9 1058.7,426.6 1060.4,425.3 1062.1,424.1 1063.8,422.8 1065.5,421.5 1067.2,420.2 1068.9,418.9 1070.6,417.7 1072.3,416.4 1074.0,415.1 1075.8,413.9 1077.5,412.6 1079.2,411.3 1080.9,410.0 1082.6,408.8 1084.3,407.5 1086.0,406.2 1087.7,404.9 1089.4,403.6 1091.1,402.4 1092.8,401.1 1094.5,399.8 1096.2,398.6 1098.0,397.3 1099.7,396.0 1101.4,394.7 1103.1,393.4 1104.8,392.2 1106.5,390.9 1108.2,389.6 1109.9,388.4 1111.6,387.1 1113.3,385.8 1115.0,384.5 1116.8,383.2 1118.5,382.0 1120.2,380.7 1121.9,379.4 1123.6,378.1 1125.3,376.9 1127.0,375.7 1128.7,374.6 1130.4,373.6 1132.1,372.7 1133.8,371.9 1135.5,371.3 1137.2,370.8 1139.0,370.3 1140.7,370.0 1142.4,369.9 1144.1,369.7 1145.8,369.6 1147.5,369.5 1149.2,369.4 1150.9,369.2 1152.6,369.1 1154.3,369.0 1156.0,368.8 1157.8,368.7 1159.5,368.6 1161.2,368.5 1162.9,368.3 1164.6,368.2 1166.3,368.1 1168.0,367.9 1168,498 963,498" fill="#d9bef3"/><polyline points="963.0,498.0 964.7,496.7 966.4,495.4 968.1,494.2 969.8,492.9 971.5,491.6 973.2,490.4 975.0,489.1 976.7,487.8 978.4,486.5 980.1,485.2 981.8,484.0 983.5,482.7 985.2,481.4 986.9,480.1 988.6,478.9 990.3,477.6 992.0,476.3 993.8,475.0 995.5,473.8 997.2,472.5 998.9,471.2 1000.6,469.9 1002.3,468.7 1004.0,467.4 1005.7,466.1 1007.4,464.9 1009.1,463.6 1010.8,462.3 1012.5,461.0 1014.2,459.8 1016.0,458.5 1017.7,457.2 1019.4,455.9 1021.1,454.6 1022.8,453.4 1024.5,452.1 1026.2,450.8 1027.9,449.6 1029.6,448.3 1031.3,447.0 1033.0,445.7 1034.8,444.4 1036.5,443.2 1038.2,441.9 1039.9,440.6 1041.6,439.4 1043.3,438.1 1045.0,436.8 1046.7,435.5 1048.4,434.2 1050.1,433.0 1051.8,431.7 1053.5,430.4 1055.2,429.1 1057.0,427.9 1058.7,426.6 1060.4,425.3 1062.1,424.1 1063.8,422.8 1065.5,421.5 1067.2,420.2 1068.9,418.9 1070.6,417.7 1072.3,416.4 1074.0,415.1 1075.8,413.9 1077.5,412.6 1079.2,411.3 1080.9,410.0 1082.6,408.8 1084.3,407.5 1086.0,406.2 1087.7,404.9 1089.4,403.6 1091.1,402.4 1092.8,401.1 1094.5,399.8 1096.2,398.6 1098.0,397.3 1099.7,396.0 1101.4,394.7 1103.1,393.4 1104.8,392.2 1106.5,390.9 1108.2,389.6 1109.9,388.4 1111.6,387.1 1113.3,385.8 1115.0,384.5 1116.8,383.2 1118.5,382.0 1120.2,380.7 1121.9,379.4 1123.6,378.1 1125.3,376.9 1127.0,375.7 1128.7,374.6 1130.4,373.6 1132.1,372.7 1133.8,371.9 1135.5,371.3 1137.2,370.8 1139.0,370.3 1140.7,370.0 1142.4,369.9 1144.1,369.7 1145.8,369.6 1147.5,369.5 1149.2,369.4 1150.9,369.2 1152.6,369.1 1154.3,369.0 1156.0,368.8 1157.8,368.7 1159.5,368.6 1161.2,368.5 1162.9,368.3 1164.6,368.2 1166.3,368.1 1168.0,367.9" fill="none" stroke="#fff" stroke-width="2.200"/><rect x="962.5" y="344.5" width="206" height="154" fill="none" stroke="#54403f" stroke-width=".9"/><path d="M963.3 344v-3.0" stroke="#333" stroke-width="1"/><path d="M1169 498.0h2.5" stroke="#333" stroke-width="1"/><path d="M1004.3 344v-5.0" stroke="#333" stroke-width="1"/><path d="M1169 467.4h5.0" stroke="#333" stroke-width="1"/><path d="M1045.3 344v-3.0" stroke="#333" stroke-width="1"/><path d="M1169 436.8h2.5" stroke="#333" stroke-width="1"/><path d="M1086.3 344v-3.0" stroke="#333" stroke-width="1"/><path d="M1169 406.2h2.5" stroke="#333" stroke-width="1"/><path d="M1127.3 344v-3.0" stroke="#333" stroke-width="1"/><path d="M1169 375.6h2.5" stroke="#333" stroke-width="1"/><path d="M1168.3 344v-5.0" stroke="#333" stroke-width="1"/><path d="M1169 345.0h5.0" stroke="#333" stroke-width="1"/></svg><div class="t" style="left:361px;top:71.6px;width:40px;text-align:center;font-size:12.700px;">-60</div><div class="t" style="left:393px;top:71.6px;width:40px;text-align:center;font-size:12.700px;font-weight:bold;">-48</div><div class="t" style="left:434px;top:71.6px;width:40px;text-align:center;font-size:12.700px;">-36</div><div class="t" style="left:475px;top:71.6px;width:40px;text-align:center;font-size:12.700px;">-24</div><div class="t" style="left:516px;top:71.6px;width:40px;text-align:center;font-size:12.700px;">-12</div><div class="t" style="left:553px;top:71.6px;width:40px;text-align:center;font-size:12.700px;font-weight:bold;">0</div><div class="t" style="left:583px;top:98.2px;font-size:12.700px;font-weight:bold;">0</div><div class="t" style="left:583px;top:123.2px;font-size:12.700px;">-12</div><div class="t" style="left:583px;top:154.0px;font-size:12.700px;">-24</div><div class="t" style="left:583px;top:183.6px;font-size:12.700px;">-36</div><div class="t" style="left:583px;top:215.0px;font-size:12.700px;font-weight:bold;">-48</div><div class="t" style="left:583px;top:239.0px;font-size:12.700px;">-60</div></div></div></body></html>
